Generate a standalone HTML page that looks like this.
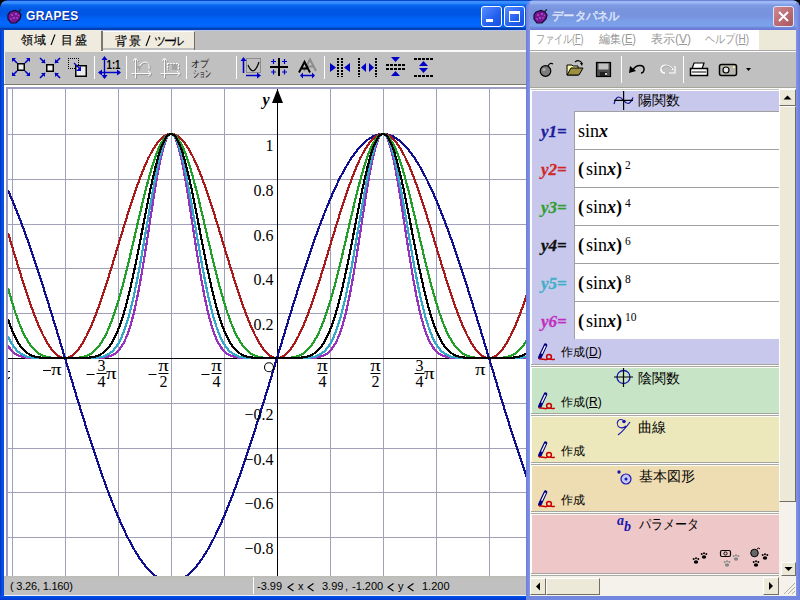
<!DOCTYPE html>
<html><head><meta charset="utf-8">
<style>
*{margin:0;padding:0;box-sizing:border-box}
html,body{width:800px;height:600px;overflow:hidden;background:#000;font-family:"Liberation Sans",sans-serif}
.a{position:absolute}
.jp{font-family:"Liberation Sans",sans-serif}
.serif{font-family:"Liberation Serif",serif}
</style></head><body>
<!-- GRAPES window -->
<div class="a" style="left:0;top:0;width:540px;height:600px;overflow:hidden;border-radius:8px 8px 0 0">
  <div class="a" style="left:0;top:0;width:540px;height:30px;border-radius:7px 7px 0 0;background:linear-gradient(#0848c8 0,#0848c8 1px,#3a8eff 1px,#3a8eff 3px,#0a68f0 5px,#0058e4 9px,#0055e2 14px,#0062f8 19px,#0068ff 25px,#0060f0 27px,#0040b8 28.5px,#0040b0 30px)"></div>
  <div class="a" style="left:0;top:30px;width:4px;height:570px;background:linear-gradient(90deg,#0030c0,#0a50e0 50%,#0050ea)"></div>
  <div class="a" style="left:0;top:596px;width:540px;height:4px;background:linear-gradient(#0050ea,#0038d0)"></div>
  <div class="a jp" style="left:26px;top:9px;font-size:12px;font-weight:bold;color:#fff;letter-spacing:0.3px;text-shadow:1px 1px #0a1e8a">GRAPES</div>
  <svg class="a" style="left:7px;top:9px" width="16" height="15" viewBox="0 0 16 15"><path d="M3 3 L8 1.5 L12 3 L14 6 L13 10 L9 14 L4 14 L1 10 L1 6 Z" fill="#741890" stroke="#180838" stroke-width="1.2"/><path d="M11 3 L14 0.5" stroke="#102838" stroke-width="1.3"/><circle cx="5" cy="6" r="0.9" fill="#c050d8"/><circle cx="9" cy="5" r="0.9" fill="#c050d8"/><circle cx="7" cy="9" r="0.9" fill="#c050d8"/><circle cx="4" cy="10" r="0.9" fill="#b040c8"/><circle cx="10" cy="9" r="0.9" fill="#b040c8"/><circle cx="11.5" cy="6.5" r="0.8" fill="#b040c8"/></svg>
  <!-- client -->
  <div class="a" style="left:4px;top:30px;width:536px;height:565px;background:#c0c0c0"></div>
  <div class="a" style="left:4px;top:30px;width:536px;height:1px;background:#b8c4e8"></div>
  <div class="a" style="left:4px;top:50px;width:536px;height:2px;background:#fafafa"></div>
  <div class="a" style="left:4px;top:30px;width:97px;height:22px;background:#efebdf"></div>
  <div class="a" style="left:101px;top:31px;width:2px;height:20px;background:#78786c"></div>
  <div class="a" style="left:21px;top:33px;font-size:12px;line-height:14px;color:#000;-webkit-text-stroke:0.15px #000">領</div><div class="a" style="left:34px;top:33px;font-size:12px;line-height:14px;color:#000;-webkit-text-stroke:0.15px #000">域</div><svg class="a" style="left:49.5px;top:34px" width="6" height="12"><path d="M5 0.5 L1 11" stroke="#000" stroke-width="1.1"/></svg><div class="a" style="left:61px;top:33px;font-size:12px;line-height:14px;color:#000;-webkit-text-stroke:0.15px #000">目</div><div class="a" style="left:74.5px;top:33px;font-size:12px;line-height:14px;color:#000;-webkit-text-stroke:0.15px #000">盛</div>
  <div class="a" style="left:103px;top:31px;width:91px;height:1px;background:#fff"></div>
  <div class="a" style="left:103px;top:32px;width:91px;height:16px;background:#efebdf"></div>
  <div class="a" style="left:194px;top:32px;width:1px;height:18px;background:#6c6c60"></div>
  <div class="a" style="left:115px;top:34px;font-size:12px;line-height:14px;color:#000;-webkit-text-stroke:0.15px #000">背</div><div class="a" style="left:128.5px;top:34px;font-size:12px;line-height:14px;color:#000;-webkit-text-stroke:0.15px #000">景</div><svg class="a" style="left:144.5px;top:35px" width="6" height="12"><path d="M5 0.5 L1 11" stroke="#000" stroke-width="1.1"/></svg><div class="a" style="left:154px;top:34px;font-size:12px;line-height:14px;color:#000;-webkit-text-stroke:0.15px #000">ツ</div><div class="a" style="left:164px;top:34px;font-size:12px;line-height:14px;color:#000;-webkit-text-stroke:0.15px #000">ー</div><div class="a" style="left:171.5px;top:34px;font-size:12px;line-height:14px;color:#000;-webkit-text-stroke:0.15px #000">ル</div>
  <!-- toolbar -->
  <div class="a" style="left:4px;top:84px;width:536px;height:1px;background:#7c7c6c"></div><div class="a" style="left:4px;top:52px;width:1px;height:32px;background:#f4f4f4"></div>
  <div class="a" style="left:4px;top:85px;width:536px;height:2px;background:#fff"></div>
  <svg class="a" style="left:0;top:0" width="540" height="90"><rect x="17.75" y="63.75" width="6.5" height="6.5" fill="#ececec" stroke="#000" stroke-width="1.5"/><path d="M12 58 h4 L12 62 Z" fill="#0000c8"/><path d="M13 59 l4 4" stroke="#0000c8" stroke-width="1.6"/><path d="M30 58 h-4 L30 62 Z" fill="#0000c8"/><path d="M29 59 l-4 4" stroke="#0000c8" stroke-width="1.6"/><path d="M12 76 h4 L12 72 Z" fill="#0000c8"/><path d="M13 75 l4 -4" stroke="#0000c8" stroke-width="1.6"/><path d="M30 76 h-4 L30 72 Z" fill="#0000c8"/><path d="M29 75 l-4 -4" stroke="#0000c8" stroke-width="1.6"/><rect x="46.75" y="64.75" width="6.5" height="6.5" fill="#ececec" stroke="#000" stroke-width="1.5"/><path d="M45 63 h-4 L45 59 Z" fill="#0000c8"/><path d="M45 63 l-5 -5" stroke="#0000c8" stroke-width="1.6"/><path d="M55 63 h4 L55 59 Z" fill="#0000c8"/><path d="M55 63 l5 -5" stroke="#0000c8" stroke-width="1.6"/><path d="M45 73 h-4 L45 77 Z" fill="#0000c8"/><path d="M45 73 l-5 5" stroke="#0000c8" stroke-width="1.6"/><path d="M55 73 h4 L55 77 Z" fill="#0000c8"/><path d="M55 73 l5 5" stroke="#0000c8" stroke-width="1.6"/><g fill="#000"><rect x="68" y="58" width="1" height="1"/><rect x="68" y="68" width="1" height="1"/><rect x="70" y="58" width="1" height="1"/><rect x="70" y="68" width="1" height="1"/><rect x="72" y="58" width="1" height="1"/><rect x="72" y="68" width="1" height="1"/><rect x="74" y="58" width="1" height="1"/><rect x="74" y="68" width="1" height="1"/><rect x="76" y="58" width="1" height="1"/><rect x="76" y="68" width="1" height="1"/><rect x="78" y="58" width="1" height="1"/><rect x="78" y="68" width="1" height="1"/><rect x="68" y="58" width="1" height="1"/><rect x="78" y="58" width="1" height="1"/><rect x="68" y="60" width="1" height="1"/><rect x="78" y="60" width="1" height="1"/><rect x="68" y="62" width="1" height="1"/><rect x="78" y="62" width="1" height="1"/><rect x="68" y="64" width="1" height="1"/><rect x="78" y="64" width="1" height="1"/><rect x="68" y="66" width="1" height="1"/><rect x="78" y="66" width="1" height="1"/><rect x="68" y="68" width="1" height="1"/><rect x="78" y="68" width="1" height="1"/></g><rect x="75.75" y="65.75" width="10.5" height="10.5" fill="#ececec" stroke="#000" stroke-width="1.5"/><path d="M74 63 L79.5 68.5" stroke="#0000c8" stroke-width="1.2"/><path d="M81 66 v5 h-5 Z" fill="#0000c8"/><rect x="94" y="56" width="1" height="23" fill="#fff"/><rect x="126" y="56" width="1" height="23" fill="#fff"/><rect x="186" y="56" width="1" height="23" fill="#fff"/><rect x="236" y="56" width="1" height="23" fill="#fff"/><rect x="324" y="56" width="1" height="23" fill="#fff"/><path d="M104.5 58 V78 M99 72.5 H120" stroke="#0000c8" stroke-width="1.4"/><path d="M104.5 56 l-3 4 h6 Z M104.5 79 l-3 -4 h6 Z M98 72.5 l4 -3 v6 Z M121 72.5 l-4 -3 v6 Z" fill="#0000c8"/><text x="106.5" y="69" font-family="Liberation Sans" font-weight="bold" font-size="12.5" fill="#000" textLength="14" lengthAdjust="spacingAndGlyphs">1:1</text><g stroke="#9a9a9a" stroke-width="1" fill="none"><path d="M136.5 60.0 V79.0"/><path d="M132.5 74.5 H152.0"/><path d="M134.0 62.0 l2.5 -3 l2.5 3"/><path d="M149.0 72.0 l3 2.5 l-3 2.5"/><path d="M139.0 71.0 Q141.0 63.0 146.0 63.0 Q151.0 63.0 150.0 70.0"/></g><g stroke="#fafafa" stroke-width="1" fill="none"><path d="M135.5 59.0 V78.0"/><path d="M131.5 73.5 H151.0"/><path d="M133.0 61.0 l2.5 -3 l2.5 3"/><path d="M148.0 71.0 l3 2.5 l-3 2.5"/><path d="M138.0 70.0 Q140.0 62.0 145.0 62.0 Q150.0 62.0 149.0 69.0"/></g><path d="M137 66 l4 0 l-3 4 Z" fill="#a4a4a4"/><g stroke="#9a9a9a" stroke-width="1" fill="none"><path d="M165.5 60.0 V79.0"/><path d="M161.5 74.5 H181.0"/><path d="M163.0 62.0 l2.5 -3 l2.5 3"/><path d="M178.0 72.0 l3 2.5 l-3 2.5"/><path d="M168.0 64.5 H179.5 V71.0" stroke-dasharray="2 1"/><path d="M168.5 64.0 V71.0" stroke-dasharray="2 1"/></g><g stroke="#fafafa" stroke-width="1" fill="none"><path d="M164.5 59.0 V78.0"/><path d="M160.5 73.5 H180.0"/><path d="M162.0 61.0 l2.5 -3 l2.5 3"/><path d="M177.0 71.0 l3 2.5 l-3 2.5"/><path d="M167.0 63.5 H178.5 V70.0" stroke-dasharray="2 1"/><path d="M167.5 63.0 V70.0" stroke-dasharray="2 1"/></g><path d="M172 65 h5 v5 h-5 Z" fill="#a4a4a4"/><text x="191" y="67" font-size="10" fill="#000" transform="translate(191 0) scale(0.9 1) translate(-191 0)">オプ</text><text x="193" y="77.5" font-size="10" fill="#000" transform="translate(193 0) scale(0.62 1) translate(-193 0)">ション</text><rect x="246.5" y="58.5" width="14" height="14" fill="none" stroke="#8c8c8c"/><path d="M248 65 Q253.5 78 259 62" stroke="#000" stroke-width="1.2" fill="none"/><path d="M243.5 73 V59" stroke="#0000c8" stroke-width="1.6"/><path d="M243.5 57 l-3 4 h6 Z" fill="#0000c8"/><path d="M246 75.5 H259" stroke="#0000c8" stroke-width="1.6"/><path d="M261 75.5 l-4 -3 v6 Z" fill="#0000c8"/><path d="M278 58 h2 v18 h-2 Z M270 66 h18 v2 h-18 Z" fill="#000"/><path d="M271.0 61.5 h5 M273.5 59.0 v5" stroke="#0000c8" stroke-width="1.2"/><path d="M282.0 61.5 h5 M284.5 59.0 v5" stroke="#0000c8" stroke-width="1.2"/><path d="M271.0 72.0 h5 M273.5 69.5 v5" stroke="#0000c8" stroke-width="1.2"/><path d="M282.0 72.0 h5 M284.5 69.5 v5" stroke="#0000c8" stroke-width="1.2"/><path d="M304 71 L310 59.5 L316 71 M306.5 66.5 H313.5" stroke="#8c8c8c" stroke-width="2" fill="none"/><path d="M299 72.5 L304.5 62 L310 72.5 M301.5 68.5 H307.5" stroke="#000" stroke-width="2" fill="none"/><path d="M302 75.5 H313" stroke="#0000c8" stroke-width="1.5"/><path d="M300 75.5 l3 -3 v6 Z M315 75.5 l-3 -3 v6 Z" fill="#0000c8"/><path d="M330 63 l6 4.5 l-6 4.5 Z M350 63 l-6 4.5 l6 4.5 Z" fill="#0000c8"/><path d="M338 58 V77 M342 58 V77" stroke="#000" stroke-width="2" stroke-dasharray="2 1"/><path d="M359 58 V77 M376 58 V77" stroke="#000" stroke-width="2" stroke-dasharray="2 1"/><path d="M361 67.5 l5 -4.5 v9 Z M374 67.5 l-5 -4.5 v9 Z" fill="#0000c8"/><path d="M391 57 h9 l-4.5 5 Z M391 76 h9 l-4.5 -5 Z" fill="#0000c8"/><path d="M386 65 H405 M386 69 H405" stroke="#000" stroke-width="2" stroke-dasharray="3 1"/><path d="M414 59 H433 M414 76 H433" stroke="#000" stroke-width="2" stroke-dasharray="3 1"/><path d="M419 66 h9 l-4.5 -5 Z M419 68 h9 l-4.5 5 Z" fill="#0000c8"/></svg>
  <!-- graph -->
  <div class="a" style="left:4px;top:85px;width:2px;height:491px;background:#fff"></div>
  <svg class="a" style="left:0;top:0" width="540" height="600" viewBox="0 0 540 600">
    <defs><clipPath id="gc"><rect x="8" y="89" width="520" height="487"/></clipPath></defs>
    <rect x="6" y="87" width="534" height="2" fill="#9c9cc4"/>
    <rect x="6" y="87" width="2" height="489" fill="#9c9cc4"/>
    <rect x="8" y="89" width="532" height="487" fill="#fff"/>
    <g clip-path="url(#gc)">
    <rect x="12" y="89" width="1" height="487" fill="#a0a0b8"/>
<rect x="65" y="89" width="1" height="487" fill="#a0a0b8"/>
<rect x="118" y="89" width="1" height="487" fill="#a0a0b8"/>
<rect x="171" y="89" width="1" height="487" fill="#a0a0b8"/>
<rect x="224" y="89" width="1" height="487" fill="#a0a0b8"/>
<rect x="330" y="89" width="1" height="487" fill="#a0a0b8"/>
<rect x="383" y="89" width="1" height="487" fill="#a0a0b8"/>
<rect x="436" y="89" width="1" height="487" fill="#a0a0b8"/>
<rect x="489" y="89" width="1" height="487" fill="#a0a0b8"/>
<rect x="8" y="134" width="520" height="1" fill="#a0a0b8"/>
<rect x="8" y="179" width="520" height="1" fill="#a0a0b8"/>
<rect x="8" y="224" width="520" height="1" fill="#a0a0b8"/>
<rect x="8" y="268" width="520" height="1" fill="#a0a0b8"/>
<rect x="8" y="313" width="520" height="1" fill="#a0a0b8"/>
<rect x="8" y="403" width="520" height="1" fill="#a0a0b8"/>
<rect x="8" y="448" width="520" height="1" fill="#a0a0b8"/>
<rect x="8" y="492" width="520" height="1" fill="#a0a0b8"/>
<rect x="8" y="537" width="520" height="1" fill="#a0a0b8"/>
    <rect x="277" y="89" width="1" height="487" fill="#000"/>
    <rect x="8" y="358" width="532" height="1" fill="#000"/>
    <polyline fill="none" stroke="#101090" stroke-width="2.2" shape-rendering="crispEdges" points="8.00,190.50 8.50,191.61 9.00,192.73 9.50,193.85 10.00,194.98 10.50,196.13 11.00,197.28 11.50,198.44 12.00,199.61 12.50,200.79 13.00,201.97 13.50,203.17 14.00,204.37 14.50,205.58 15.00,206.80 15.50,208.03 16.00,209.27 16.50,210.51 17.00,211.77 17.50,213.03 18.00,214.30 18.50,215.58 19.00,216.86 19.50,218.15 20.00,219.45 20.50,220.76 21.00,222.08 21.50,223.40 22.00,224.73 22.50,226.07 23.00,227.41 23.50,228.76 24.00,230.12 24.50,231.49 25.00,232.86 25.50,234.24 26.00,235.63 26.50,237.02 27.00,238.42 27.50,239.83 28.00,241.24 28.50,242.66 29.00,244.09 29.50,245.52 30.00,246.96 30.50,248.40 31.00,249.85 31.50,251.31 32.00,252.77 32.50,254.24 33.00,255.72 33.50,257.19 34.00,258.68 34.50,260.17 35.00,261.67 35.50,263.17 36.00,264.67 36.50,266.18 37.00,267.70 37.50,269.22 38.00,270.75 38.50,272.28 39.00,273.81 39.50,275.35 40.00,276.90 40.50,278.45 41.00,280.00 41.50,281.56 42.00,283.12 42.50,284.69 43.00,286.26 43.50,287.83 44.00,289.41 44.50,290.99 45.00,292.58 45.50,294.17 46.00,295.76 46.50,297.36 47.00,298.96 47.50,300.56 48.00,302.16 48.50,303.77 49.00,305.39 49.50,307.00 50.00,308.62 50.50,310.24 51.00,311.86 51.50,313.49 52.00,315.11 52.50,316.74 53.00,318.38 53.50,320.01 54.00,321.65 54.50,323.29 55.00,324.93 55.50,326.57 56.00,328.21 56.50,329.86 57.00,331.51 57.50,333.16 58.00,334.81 58.50,336.46 59.00,338.11 59.50,339.76 60.00,341.42 60.50,343.07 61.00,344.73 61.50,346.39 62.00,348.05 62.50,349.70 63.00,351.36 63.50,353.02 64.00,354.68 64.50,356.34 65.00,358.00 65.50,359.66 66.00,361.32 66.50,362.98 67.00,364.64 67.50,366.30 68.00,367.95 68.50,369.61 69.00,371.27 69.50,372.93 70.00,374.58 70.50,376.24 71.00,377.89 71.50,379.54 72.00,381.19 72.50,382.84 73.00,384.49 73.50,386.14 74.00,387.79 74.50,389.43 75.00,391.07 75.50,392.71 76.00,394.35 76.50,395.99 77.00,397.62 77.50,399.26 78.00,400.89 78.50,402.51 79.00,404.14 79.50,405.76 80.00,407.38 80.50,409.00 81.00,410.61 81.50,412.23 82.00,413.84 82.50,415.44 83.00,417.04 83.50,418.64 84.00,420.24 84.50,421.83 85.00,423.42 85.50,425.01 86.00,426.59 86.50,428.17 87.00,429.74 87.50,431.31 88.00,432.88 88.50,434.44 89.00,436.00 89.50,437.55 90.00,439.10 90.50,440.65 91.00,442.19 91.50,443.72 92.00,445.25 92.50,446.78 93.00,448.30 93.50,449.82 94.00,451.33 94.50,452.83 95.00,454.33 95.50,455.83 96.00,457.32 96.50,458.81 97.00,460.28 97.50,461.76 98.00,463.23 98.50,464.69 99.00,466.15 99.50,467.60 100.00,469.04 100.50,470.48 101.00,471.91 101.50,473.34 102.00,474.76 102.50,476.17 103.00,477.58 103.50,478.98 104.00,480.37 104.50,481.76 105.00,483.14 105.50,484.51 106.00,485.88 106.50,487.24 107.00,488.59 107.50,489.93 108.00,491.27 108.50,492.60 109.00,493.92 109.50,495.24 110.00,496.55 110.50,497.85 111.00,499.14 111.50,500.42 112.00,501.70 112.50,502.97 113.00,504.23 113.50,505.49 114.00,506.73 114.50,507.97 115.00,509.20 115.50,510.42 116.00,511.63 116.50,512.83 117.00,514.03 117.50,515.21 118.00,516.39 118.50,517.56 119.00,518.72 119.50,519.87 120.00,521.02 120.50,522.15 121.00,523.27 121.50,524.39 122.00,525.50 122.50,526.59 123.00,527.68 123.50,528.76 124.00,529.83 124.50,530.89 125.00,531.94 125.50,532.98 126.00,534.01 126.50,535.04 127.00,536.05 127.50,537.05 128.00,538.04 128.50,539.02 129.00,540.00 129.50,540.96 130.00,541.91 130.50,542.85 131.00,543.79 131.50,544.71 132.00,545.62 132.50,546.52 133.00,547.41 133.50,548.29 134.00,549.16 134.50,550.02 135.00,550.87 135.50,551.71 136.00,552.54 136.50,553.36 137.00,554.16 137.50,554.96 138.00,555.75 138.50,556.52 139.00,557.28 139.50,558.04 140.00,558.78 140.50,559.51 141.00,560.23 141.50,560.93 142.00,561.63 142.50,562.32 143.00,562.99 143.50,563.66 144.00,564.31 144.50,564.95 145.00,565.58 145.50,566.20 146.00,566.80 146.50,567.40 147.00,567.98 147.50,568.55 148.00,569.11 148.50,569.66 149.00,570.20 149.50,570.73 150.00,571.24 150.50,571.74 151.00,572.23 151.50,572.71 152.00,573.18 152.50,573.63 153.00,574.08 153.50,574.51 154.00,574.93 154.50,575.34 155.00,575.73 155.50,576.12 156.00,576.49 156.50,576.85 157.00,577.20 157.50,577.53 158.00,577.86 158.50,578.17 159.00,578.47 159.50,578.76 160.00,579.03 160.50,579.29 161.00,579.55 161.50,579.78 162.00,580.01 162.50,580.23 163.00,580.43 163.50,580.62 164.00,580.80 164.50,580.96 165.00,581.12 165.50,581.26 166.00,581.39 166.50,581.50 167.00,581.61 167.50,581.70 168.00,581.78 168.50,581.85 169.00,581.90 169.50,581.94 170.00,581.98 170.50,581.99 171.00,582.00 171.50,581.99 172.00,581.98 172.50,581.94 173.00,581.90 173.50,581.85 174.00,581.78 174.50,581.70 175.00,581.61 175.50,581.50 176.00,581.39 176.50,581.26 177.00,581.12 177.50,580.96 178.00,580.80 178.50,580.62 179.00,580.43 179.50,580.23 180.00,580.01 180.50,579.78 181.00,579.55 181.50,579.29 182.00,579.03 182.50,578.76 183.00,578.47 183.50,578.17 184.00,577.86 184.50,577.53 185.00,577.20 185.50,576.85 186.00,576.49 186.50,576.12 187.00,575.73 187.50,575.34 188.00,574.93 188.50,574.51 189.00,574.08 189.50,573.63 190.00,573.18 190.50,572.71 191.00,572.23 191.50,571.74 192.00,571.24 192.50,570.73 193.00,570.20 193.50,569.66 194.00,569.11 194.50,568.55 195.00,567.98 195.50,567.40 196.00,566.80 196.50,566.20 197.00,565.58 197.50,564.95 198.00,564.31 198.50,563.66 199.00,562.99 199.50,562.32 200.00,561.63 200.50,560.93 201.00,560.23 201.50,559.51 202.00,558.78 202.50,558.04 203.00,557.28 203.50,556.52 204.00,555.75 204.50,554.96 205.00,554.16 205.50,553.36 206.00,552.54 206.50,551.71 207.00,550.87 207.50,550.02 208.00,549.16 208.50,548.29 209.00,547.41 209.50,546.52 210.00,545.62 210.50,544.71 211.00,543.79 211.50,542.85 212.00,541.91 212.50,540.96 213.00,540.00 213.50,539.02 214.00,538.04 214.50,537.05 215.00,536.05 215.50,535.04 216.00,534.01 216.50,532.98 217.00,531.94 217.50,530.89 218.00,529.83 218.50,528.76 219.00,527.68 219.50,526.59 220.00,525.50 220.50,524.39 221.00,523.27 221.50,522.15 222.00,521.02 222.50,519.87 223.00,518.72 223.50,517.56 224.00,516.39 224.50,515.21 225.00,514.03 225.50,512.83 226.00,511.63 226.50,510.42 227.00,509.20 227.50,507.97 228.00,506.73 228.50,505.49 229.00,504.23 229.50,502.97 230.00,501.70 230.50,500.42 231.00,499.14 231.50,497.85 232.00,496.55 232.50,495.24 233.00,493.92 233.50,492.60 234.00,491.27 234.50,489.93 235.00,488.59 235.50,487.24 236.00,485.88 236.50,484.51 237.00,483.14 237.50,481.76 238.00,480.37 238.50,478.98 239.00,477.58 239.50,476.17 240.00,474.76 240.50,473.34 241.00,471.91 241.50,470.48 242.00,469.04 242.50,467.60 243.00,466.15 243.50,464.69 244.00,463.23 244.50,461.76 245.00,460.28 245.50,458.81 246.00,457.32 246.50,455.83 247.00,454.33 247.50,452.83 248.00,451.33 248.50,449.82 249.00,448.30 249.50,446.78 250.00,445.25 250.50,443.72 251.00,442.19 251.50,440.65 252.00,439.10 252.50,437.55 253.00,436.00 253.50,434.44 254.00,432.88 254.50,431.31 255.00,429.74 255.50,428.17 256.00,426.59 256.50,425.01 257.00,423.42 257.50,421.83 258.00,420.24 258.50,418.64 259.00,417.04 259.50,415.44 260.00,413.84 260.50,412.23 261.00,410.61 261.50,409.00 262.00,407.38 262.50,405.76 263.00,404.14 263.50,402.51 264.00,400.89 264.50,399.26 265.00,397.62 265.50,395.99 266.00,394.35 266.50,392.71 267.00,391.07 267.50,389.43 268.00,387.79 268.50,386.14 269.00,384.49 269.50,382.84 270.00,381.19 270.50,379.54 271.00,377.89 271.50,376.24 272.00,374.58 272.50,372.93 273.00,371.27 273.50,369.61 274.00,367.95 274.50,366.30 275.00,364.64 275.50,362.98 276.00,361.32 276.50,359.66 277.00,358.00 277.50,356.34 278.00,354.68 278.50,353.02 279.00,351.36 279.50,349.70 280.00,348.05 280.50,346.39 281.00,344.73 281.50,343.07 282.00,341.42 282.50,339.76 283.00,338.11 283.50,336.46 284.00,334.81 284.50,333.16 285.00,331.51 285.50,329.86 286.00,328.21 286.50,326.57 287.00,324.93 287.50,323.29 288.00,321.65 288.50,320.01 289.00,318.38 289.50,316.74 290.00,315.11 290.50,313.49 291.00,311.86 291.50,310.24 292.00,308.62 292.50,307.00 293.00,305.39 293.50,303.77 294.00,302.16 294.50,300.56 295.00,298.96 295.50,297.36 296.00,295.76 296.50,294.17 297.00,292.58 297.50,290.99 298.00,289.41 298.50,287.83 299.00,286.26 299.50,284.69 300.00,283.12 300.50,281.56 301.00,280.00 301.50,278.45 302.00,276.90 302.50,275.35 303.00,273.81 303.50,272.28 304.00,270.75 304.50,269.22 305.00,267.70 305.50,266.18 306.00,264.67 306.50,263.17 307.00,261.67 307.50,260.17 308.00,258.68 308.50,257.19 309.00,255.72 309.50,254.24 310.00,252.77 310.50,251.31 311.00,249.85 311.50,248.40 312.00,246.96 312.50,245.52 313.00,244.09 313.50,242.66 314.00,241.24 314.50,239.83 315.00,238.42 315.50,237.02 316.00,235.63 316.50,234.24 317.00,232.86 317.50,231.49 318.00,230.12 318.50,228.76 319.00,227.41 319.50,226.07 320.00,224.73 320.50,223.40 321.00,222.08 321.50,220.76 322.00,219.45 322.50,218.15 323.00,216.86 323.50,215.58 324.00,214.30 324.50,213.03 325.00,211.77 325.50,210.51 326.00,209.27 326.50,208.03 327.00,206.80 327.50,205.58 328.00,204.37 328.50,203.17 329.00,201.97 329.50,200.79 330.00,199.61 330.50,198.44 331.00,197.28 331.50,196.13 332.00,194.98 332.50,193.85 333.00,192.73 333.50,191.61 334.00,190.50 334.50,189.41 335.00,188.32 335.50,187.24 336.00,186.17 336.50,185.11 337.00,184.06 337.50,183.02 338.00,181.99 338.50,180.96 339.00,179.95 339.50,178.95 340.00,177.96 340.50,176.98 341.00,176.00 341.50,175.04 342.00,174.09 342.50,173.15 343.00,172.21 343.50,171.29 344.00,170.38 344.50,169.48 345.00,168.59 345.50,167.71 346.00,166.84 346.50,165.98 347.00,165.13 347.50,164.29 348.00,163.46 348.50,162.64 349.00,161.84 349.50,161.04 350.00,160.25 350.50,159.48 351.00,158.72 351.50,157.96 352.00,157.22 352.50,156.49 353.00,155.77 353.50,155.07 354.00,154.37 354.50,153.68 355.00,153.01 355.50,152.34 356.00,151.69 356.50,151.05 357.00,150.42 357.50,149.80 358.00,149.20 358.50,148.60 359.00,148.02 359.50,147.45 360.00,146.89 360.50,146.34 361.00,145.80 361.50,145.27 362.00,144.76 362.50,144.26 363.00,143.77 363.50,143.29 364.00,142.82 364.50,142.37 365.00,141.92 365.50,141.49 366.00,141.07 366.50,140.66 367.00,140.27 367.50,139.88 368.00,139.51 368.50,139.15 369.00,138.80 369.50,138.47 370.00,138.14 370.50,137.83 371.00,137.53 371.50,137.24 372.00,136.97 372.50,136.71 373.00,136.45 373.50,136.22 374.00,135.99 374.50,135.77 375.00,135.57 375.50,135.38 376.00,135.20 376.50,135.04 377.00,134.88 377.50,134.74 378.00,134.61 378.50,134.50 379.00,134.39 379.50,134.30 380.00,134.22 380.50,134.15 381.00,134.10 381.50,134.06 382.00,134.02 382.50,134.01 383.00,134.00 383.50,134.01 384.00,134.02 384.50,134.06 385.00,134.10 385.50,134.15 386.00,134.22 386.50,134.30 387.00,134.39 387.50,134.50 388.00,134.61 388.50,134.74 389.00,134.88 389.50,135.04 390.00,135.20 390.50,135.38 391.00,135.57 391.50,135.77 392.00,135.99 392.50,136.22 393.00,136.45 393.50,136.71 394.00,136.97 394.50,137.24 395.00,137.53 395.50,137.83 396.00,138.14 396.50,138.47 397.00,138.80 397.50,139.15 398.00,139.51 398.50,139.88 399.00,140.27 399.50,140.66 400.00,141.07 400.50,141.49 401.00,141.92 401.50,142.37 402.00,142.82 402.50,143.29 403.00,143.77 403.50,144.26 404.00,144.76 404.50,145.27 405.00,145.80 405.50,146.34 406.00,146.89 406.50,147.45 407.00,148.02 407.50,148.60 408.00,149.20 408.50,149.80 409.00,150.42 409.50,151.05 410.00,151.69 410.50,152.34 411.00,153.01 411.50,153.68 412.00,154.37 412.50,155.07 413.00,155.77 413.50,156.49 414.00,157.22 414.50,157.96 415.00,158.72 415.50,159.48 416.00,160.25 416.50,161.04 417.00,161.84 417.50,162.64 418.00,163.46 418.50,164.29 419.00,165.13 419.50,165.98 420.00,166.84 420.50,167.71 421.00,168.59 421.50,169.48 422.00,170.38 422.50,171.29 423.00,172.21 423.50,173.15 424.00,174.09 424.50,175.04 425.00,176.00 425.50,176.98 426.00,177.96 426.50,178.95 427.00,179.95 427.50,180.96 428.00,181.99 428.50,183.02 429.00,184.06 429.50,185.11 430.00,186.17 430.50,187.24 431.00,188.32 431.50,189.41 432.00,190.50 432.50,191.61 433.00,192.73 433.50,193.85 434.00,194.98 434.50,196.13 435.00,197.28 435.50,198.44 436.00,199.61 436.50,200.79 437.00,201.97 437.50,203.17 438.00,204.37 438.50,205.58 439.00,206.80 439.50,208.03 440.00,209.27 440.50,210.51 441.00,211.77 441.50,213.03 442.00,214.30 442.50,215.58 443.00,216.86 443.50,218.15 444.00,219.45 444.50,220.76 445.00,222.08 445.50,223.40 446.00,224.73 446.50,226.07 447.00,227.41 447.50,228.76 448.00,230.12 448.50,231.49 449.00,232.86 449.50,234.24 450.00,235.63 450.50,237.02 451.00,238.42 451.50,239.83 452.00,241.24 452.50,242.66 453.00,244.09 453.50,245.52 454.00,246.96 454.50,248.40 455.00,249.85 455.50,251.31 456.00,252.77 456.50,254.24 457.00,255.72 457.50,257.19 458.00,258.68 458.50,260.17 459.00,261.67 459.50,263.17 460.00,264.67 460.50,266.18 461.00,267.70 461.50,269.22 462.00,270.75 462.50,272.28 463.00,273.81 463.50,275.35 464.00,276.90 464.50,278.45 465.00,280.00 465.50,281.56 466.00,283.12 466.50,284.69 467.00,286.26 467.50,287.83 468.00,289.41 468.50,290.99 469.00,292.58 469.50,294.17 470.00,295.76 470.50,297.36 471.00,298.96 471.50,300.56 472.00,302.16 472.50,303.77 473.00,305.39 473.50,307.00 474.00,308.62 474.50,310.24 475.00,311.86 475.50,313.49 476.00,315.11 476.50,316.74 477.00,318.38 477.50,320.01 478.00,321.65 478.50,323.29 479.00,324.93 479.50,326.57 480.00,328.21 480.50,329.86 481.00,331.51 481.50,333.16 482.00,334.81 482.50,336.46 483.00,338.11 483.50,339.76 484.00,341.42 484.50,343.07 485.00,344.73 485.50,346.39 486.00,348.05 486.50,349.70 487.00,351.36 487.50,353.02 488.00,354.68 488.50,356.34 489.00,358.00 489.50,359.66 490.00,361.32 490.50,362.98 491.00,364.64 491.50,366.30 492.00,367.95 492.50,369.61 493.00,371.27 493.50,372.93 494.00,374.58 494.50,376.24 495.00,377.89 495.50,379.54 496.00,381.19 496.50,382.84 497.00,384.49 497.50,386.14 498.00,387.79 498.50,389.43 499.00,391.07 499.50,392.71 500.00,394.35 500.50,395.99 501.00,397.62 501.50,399.26 502.00,400.89 502.50,402.51 503.00,404.14 503.50,405.76 504.00,407.38 504.50,409.00 505.00,410.61 505.50,412.23 506.00,413.84 506.50,415.44 507.00,417.04 507.50,418.64 508.00,420.24 508.50,421.83 509.00,423.42 509.50,425.01 510.00,426.59 510.50,428.17 511.00,429.74 511.50,431.31 512.00,432.88 512.50,434.44 513.00,436.00 513.50,437.55 514.00,439.10 514.50,440.65 515.00,442.19 515.50,443.72 516.00,445.25 516.50,446.78 517.00,448.30 517.50,449.82 518.00,451.33 518.50,452.83 519.00,454.33 519.50,455.83 520.00,457.32 520.50,458.81 521.00,460.28 521.50,461.76 522.00,463.23 522.50,464.69 523.00,466.15 523.50,467.60 524.00,469.04 524.50,470.48 525.00,471.91 525.50,473.34 526.00,474.76 526.50,476.17 527.00,477.58"/>
<polyline fill="none" stroke="#aa1a1a" stroke-width="2.2" shape-rendering="crispEdges" points="8.00,232.75 8.50,234.40 9.00,236.05 9.50,237.71 10.00,239.37 10.50,241.02 11.00,242.68 11.50,244.34 12.00,246.00 12.50,247.66 13.00,249.32 13.50,250.98 14.00,252.63 14.50,254.29 15.00,255.95 15.50,257.60 16.00,259.25 16.50,260.89 17.00,262.54 17.50,264.18 18.00,265.81 18.50,267.44 19.00,269.07 19.50,270.69 20.00,272.31 20.50,273.92 21.00,275.52 21.50,277.12 22.00,278.71 22.50,280.29 23.00,281.87 23.50,283.44 24.00,285.00 24.50,286.55 25.00,288.09 25.50,289.63 26.00,291.15 26.50,292.66 27.00,294.17 27.50,295.66 28.00,297.14 28.50,298.61 29.00,300.07 29.50,301.52 30.00,302.96 30.50,304.38 31.00,305.79 31.50,307.19 32.00,308.57 32.50,309.94 33.00,311.29 33.50,312.63 34.00,313.96 34.50,315.27 35.00,316.57 35.50,317.85 36.00,319.12 36.50,320.37 37.00,321.60 37.50,322.81 38.00,324.01 38.50,325.20 39.00,326.36 39.50,327.51 40.00,328.64 40.50,329.75 41.00,330.84 41.50,331.92 42.00,332.97 42.50,334.01 43.00,335.02 43.50,336.02 44.00,337.00 44.50,337.96 45.00,338.89 45.50,339.81 46.00,340.71 46.50,341.58 47.00,342.44 47.50,343.27 48.00,344.08 48.50,344.87 49.00,345.64 49.50,346.39 50.00,347.11 50.50,347.82 51.00,348.50 51.50,349.15 52.00,349.79 52.50,350.40 53.00,350.99 53.50,351.56 54.00,352.10 54.50,352.62 55.00,353.12 55.50,353.59 56.00,354.04 56.50,354.46 57.00,354.87 57.50,355.24 58.00,355.60 58.50,355.93 59.00,356.23 59.50,356.52 60.00,356.77 60.50,357.01 61.00,357.21 61.50,357.40 62.00,357.56 62.50,357.69 63.00,357.80 63.50,357.89 64.00,357.95 64.50,357.99 65.00,358.00 65.50,357.99 66.00,357.95 66.50,357.89 67.00,357.80 67.50,357.69 68.00,357.56 68.50,357.40 69.00,357.21 69.50,357.01 70.00,356.77 70.50,356.52 71.00,356.23 71.50,355.93 72.00,355.60 72.50,355.24 73.00,354.87 73.50,354.46 74.00,354.04 74.50,353.59 75.00,353.12 75.50,352.62 76.00,352.10 76.50,351.56 77.00,350.99 77.50,350.40 78.00,349.79 78.50,349.15 79.00,348.50 79.50,347.82 80.00,347.11 80.50,346.39 81.00,345.64 81.50,344.87 82.00,344.08 82.50,343.27 83.00,342.44 83.50,341.58 84.00,340.71 84.50,339.81 85.00,338.89 85.50,337.96 86.00,337.00 86.50,336.02 87.00,335.02 87.50,334.01 88.00,332.97 88.50,331.92 89.00,330.84 89.50,329.75 90.00,328.64 90.50,327.51 91.00,326.36 91.50,325.20 92.00,324.01 92.50,322.81 93.00,321.60 93.50,320.37 94.00,319.12 94.50,317.85 95.00,316.57 95.50,315.27 96.00,313.96 96.50,312.63 97.00,311.29 97.50,309.94 98.00,308.57 98.50,307.19 99.00,305.79 99.50,304.38 100.00,302.96 100.50,301.52 101.00,300.07 101.50,298.61 102.00,297.14 102.50,295.66 103.00,294.17 103.50,292.66 104.00,291.15 104.50,289.63 105.00,288.09 105.50,286.55 106.00,285.00 106.50,283.44 107.00,281.87 107.50,280.29 108.00,278.71 108.50,277.12 109.00,275.52 109.50,273.92 110.00,272.31 110.50,270.69 111.00,269.07 111.50,267.44 112.00,265.81 112.50,264.18 113.00,262.54 113.50,260.89 114.00,259.25 114.50,257.60 115.00,255.95 115.50,254.29 116.00,252.63 116.50,250.98 117.00,249.32 117.50,247.66 118.00,246.00 118.50,244.34 119.00,242.68 119.50,241.02 120.00,239.37 120.50,237.71 121.00,236.05 121.50,234.40 122.00,232.75 122.50,231.11 123.00,229.46 123.50,227.82 124.00,226.19 124.50,224.56 125.00,222.93 125.50,221.31 126.00,219.69 126.50,218.08 127.00,216.48 127.50,214.88 128.00,213.29 128.50,211.71 129.00,210.13 129.50,208.56 130.00,207.00 130.50,205.45 131.00,203.91 131.50,202.37 132.00,200.85 132.50,199.34 133.00,197.83 133.50,196.34 134.00,194.86 134.50,193.39 135.00,191.93 135.50,190.48 136.00,189.04 136.50,187.62 137.00,186.21 137.50,184.81 138.00,183.43 138.50,182.06 139.00,180.71 139.50,179.37 140.00,178.04 140.50,176.73 141.00,175.43 141.50,174.15 142.00,172.88 142.50,171.63 143.00,170.40 143.50,169.19 144.00,167.99 144.50,166.80 145.00,165.64 145.50,164.49 146.00,163.36 146.50,162.25 147.00,161.16 147.50,160.08 148.00,159.03 148.50,157.99 149.00,156.98 149.50,155.98 150.00,155.00 150.50,154.04 151.00,153.11 151.50,152.19 152.00,151.29 152.50,150.42 153.00,149.56 153.50,148.73 154.00,147.92 154.50,147.13 155.00,146.36 155.50,145.61 156.00,144.89 156.50,144.18 157.00,143.50 157.50,142.85 158.00,142.21 158.50,141.60 159.00,141.01 159.50,140.44 160.00,139.90 160.50,139.38 161.00,138.88 161.50,138.41 162.00,137.96 162.50,137.54 163.00,137.13 163.50,136.76 164.00,136.40 164.50,136.07 165.00,135.77 165.50,135.48 166.00,135.23 166.50,134.99 167.00,134.79 167.50,134.60 168.00,134.44 168.50,134.31 169.00,134.20 169.50,134.11 170.00,134.05 170.50,134.01 171.00,134.00 171.50,134.01 172.00,134.05 172.50,134.11 173.00,134.20 173.50,134.31 174.00,134.44 174.50,134.60 175.00,134.79 175.50,134.99 176.00,135.23 176.50,135.48 177.00,135.77 177.50,136.07 178.00,136.40 178.50,136.76 179.00,137.13 179.50,137.54 180.00,137.96 180.50,138.41 181.00,138.88 181.50,139.38 182.00,139.90 182.50,140.44 183.00,141.01 183.50,141.60 184.00,142.21 184.50,142.85 185.00,143.50 185.50,144.18 186.00,144.89 186.50,145.61 187.00,146.36 187.50,147.13 188.00,147.92 188.50,148.73 189.00,149.56 189.50,150.42 190.00,151.29 190.50,152.19 191.00,153.11 191.50,154.04 192.00,155.00 192.50,155.98 193.00,156.98 193.50,157.99 194.00,159.03 194.50,160.08 195.00,161.16 195.50,162.25 196.00,163.36 196.50,164.49 197.00,165.64 197.50,166.80 198.00,167.99 198.50,169.19 199.00,170.40 199.50,171.63 200.00,172.88 200.50,174.15 201.00,175.43 201.50,176.73 202.00,178.04 202.50,179.37 203.00,180.71 203.50,182.06 204.00,183.43 204.50,184.81 205.00,186.21 205.50,187.62 206.00,189.04 206.50,190.48 207.00,191.93 207.50,193.39 208.00,194.86 208.50,196.34 209.00,197.83 209.50,199.34 210.00,200.85 210.50,202.37 211.00,203.91 211.50,205.45 212.00,207.00 212.50,208.56 213.00,210.13 213.50,211.71 214.00,213.29 214.50,214.88 215.00,216.48 215.50,218.08 216.00,219.69 216.50,221.31 217.00,222.93 217.50,224.56 218.00,226.19 218.50,227.82 219.00,229.46 219.50,231.11 220.00,232.75 220.50,234.40 221.00,236.05 221.50,237.71 222.00,239.37 222.50,241.02 223.00,242.68 223.50,244.34 224.00,246.00 224.50,247.66 225.00,249.32 225.50,250.98 226.00,252.63 226.50,254.29 227.00,255.95 227.50,257.60 228.00,259.25 228.50,260.89 229.00,262.54 229.50,264.18 230.00,265.81 230.50,267.44 231.00,269.07 231.50,270.69 232.00,272.31 232.50,273.92 233.00,275.52 233.50,277.12 234.00,278.71 234.50,280.29 235.00,281.87 235.50,283.44 236.00,285.00 236.50,286.55 237.00,288.09 237.50,289.63 238.00,291.15 238.50,292.66 239.00,294.17 239.50,295.66 240.00,297.14 240.50,298.61 241.00,300.07 241.50,301.52 242.00,302.96 242.50,304.38 243.00,305.79 243.50,307.19 244.00,308.57 244.50,309.94 245.00,311.29 245.50,312.63 246.00,313.96 246.50,315.27 247.00,316.57 247.50,317.85 248.00,319.12 248.50,320.37 249.00,321.60 249.50,322.81 250.00,324.01 250.50,325.20 251.00,326.36 251.50,327.51 252.00,328.64 252.50,329.75 253.00,330.84 253.50,331.92 254.00,332.97 254.50,334.01 255.00,335.02 255.50,336.02 256.00,337.00 256.50,337.96 257.00,338.89 257.50,339.81 258.00,340.71 258.50,341.58 259.00,342.44 259.50,343.27 260.00,344.08 260.50,344.87 261.00,345.64 261.50,346.39 262.00,347.11 262.50,347.82 263.00,348.50 263.50,349.15 264.00,349.79 264.50,350.40 265.00,350.99 265.50,351.56 266.00,352.10 266.50,352.62 267.00,353.12 267.50,353.59 268.00,354.04 268.50,354.46 269.00,354.87 269.50,355.24 270.00,355.60 270.50,355.93 271.00,356.23 271.50,356.52 272.00,356.77 272.50,357.01 273.00,357.21 273.50,357.40 274.00,357.56 274.50,357.69 275.00,357.80 275.50,357.89 276.00,357.95 276.50,357.99 277.00,358.00 277.50,357.99 278.00,357.95 278.50,357.89 279.00,357.80 279.50,357.69 280.00,357.56 280.50,357.40 281.00,357.21 281.50,357.01 282.00,356.77 282.50,356.52 283.00,356.23 283.50,355.93 284.00,355.60 284.50,355.24 285.00,354.87 285.50,354.46 286.00,354.04 286.50,353.59 287.00,353.12 287.50,352.62 288.00,352.10 288.50,351.56 289.00,350.99 289.50,350.40 290.00,349.79 290.50,349.15 291.00,348.50 291.50,347.82 292.00,347.11 292.50,346.39 293.00,345.64 293.50,344.87 294.00,344.08 294.50,343.27 295.00,342.44 295.50,341.58 296.00,340.71 296.50,339.81 297.00,338.89 297.50,337.96 298.00,337.00 298.50,336.02 299.00,335.02 299.50,334.01 300.00,332.97 300.50,331.92 301.00,330.84 301.50,329.75 302.00,328.64 302.50,327.51 303.00,326.36 303.50,325.20 304.00,324.01 304.50,322.81 305.00,321.60 305.50,320.37 306.00,319.12 306.50,317.85 307.00,316.57 307.50,315.27 308.00,313.96 308.50,312.63 309.00,311.29 309.50,309.94 310.00,308.57 310.50,307.19 311.00,305.79 311.50,304.38 312.00,302.96 312.50,301.52 313.00,300.07 313.50,298.61 314.00,297.14 314.50,295.66 315.00,294.17 315.50,292.66 316.00,291.15 316.50,289.63 317.00,288.09 317.50,286.55 318.00,285.00 318.50,283.44 319.00,281.87 319.50,280.29 320.00,278.71 320.50,277.12 321.00,275.52 321.50,273.92 322.00,272.31 322.50,270.69 323.00,269.07 323.50,267.44 324.00,265.81 324.50,264.18 325.00,262.54 325.50,260.89 326.00,259.25 326.50,257.60 327.00,255.95 327.50,254.29 328.00,252.63 328.50,250.98 329.00,249.32 329.50,247.66 330.00,246.00 330.50,244.34 331.00,242.68 331.50,241.02 332.00,239.37 332.50,237.71 333.00,236.05 333.50,234.40 334.00,232.75 334.50,231.11 335.00,229.46 335.50,227.82 336.00,226.19 336.50,224.56 337.00,222.93 337.50,221.31 338.00,219.69 338.50,218.08 339.00,216.48 339.50,214.88 340.00,213.29 340.50,211.71 341.00,210.13 341.50,208.56 342.00,207.00 342.50,205.45 343.00,203.91 343.50,202.37 344.00,200.85 344.50,199.34 345.00,197.83 345.50,196.34 346.00,194.86 346.50,193.39 347.00,191.93 347.50,190.48 348.00,189.04 348.50,187.62 349.00,186.21 349.50,184.81 350.00,183.43 350.50,182.06 351.00,180.71 351.50,179.37 352.00,178.04 352.50,176.73 353.00,175.43 353.50,174.15 354.00,172.88 354.50,171.63 355.00,170.40 355.50,169.19 356.00,167.99 356.50,166.80 357.00,165.64 357.50,164.49 358.00,163.36 358.50,162.25 359.00,161.16 359.50,160.08 360.00,159.03 360.50,157.99 361.00,156.98 361.50,155.98 362.00,155.00 362.50,154.04 363.00,153.11 363.50,152.19 364.00,151.29 364.50,150.42 365.00,149.56 365.50,148.73 366.00,147.92 366.50,147.13 367.00,146.36 367.50,145.61 368.00,144.89 368.50,144.18 369.00,143.50 369.50,142.85 370.00,142.21 370.50,141.60 371.00,141.01 371.50,140.44 372.00,139.90 372.50,139.38 373.00,138.88 373.50,138.41 374.00,137.96 374.50,137.54 375.00,137.13 375.50,136.76 376.00,136.40 376.50,136.07 377.00,135.77 377.50,135.48 378.00,135.23 378.50,134.99 379.00,134.79 379.50,134.60 380.00,134.44 380.50,134.31 381.00,134.20 381.50,134.11 382.00,134.05 382.50,134.01 383.00,134.00 383.50,134.01 384.00,134.05 384.50,134.11 385.00,134.20 385.50,134.31 386.00,134.44 386.50,134.60 387.00,134.79 387.50,134.99 388.00,135.23 388.50,135.48 389.00,135.77 389.50,136.07 390.00,136.40 390.50,136.76 391.00,137.13 391.50,137.54 392.00,137.96 392.50,138.41 393.00,138.88 393.50,139.38 394.00,139.90 394.50,140.44 395.00,141.01 395.50,141.60 396.00,142.21 396.50,142.85 397.00,143.50 397.50,144.18 398.00,144.89 398.50,145.61 399.00,146.36 399.50,147.13 400.00,147.92 400.50,148.73 401.00,149.56 401.50,150.42 402.00,151.29 402.50,152.19 403.00,153.11 403.50,154.04 404.00,155.00 404.50,155.98 405.00,156.98 405.50,157.99 406.00,159.03 406.50,160.08 407.00,161.16 407.50,162.25 408.00,163.36 408.50,164.49 409.00,165.64 409.50,166.80 410.00,167.99 410.50,169.19 411.00,170.40 411.50,171.63 412.00,172.88 412.50,174.15 413.00,175.43 413.50,176.73 414.00,178.04 414.50,179.37 415.00,180.71 415.50,182.06 416.00,183.43 416.50,184.81 417.00,186.21 417.50,187.62 418.00,189.04 418.50,190.48 419.00,191.93 419.50,193.39 420.00,194.86 420.50,196.34 421.00,197.83 421.50,199.34 422.00,200.85 422.50,202.37 423.00,203.91 423.50,205.45 424.00,207.00 424.50,208.56 425.00,210.13 425.50,211.71 426.00,213.29 426.50,214.88 427.00,216.48 427.50,218.08 428.00,219.69 428.50,221.31 429.00,222.93 429.50,224.56 430.00,226.19 430.50,227.82 431.00,229.46 431.50,231.11 432.00,232.75 432.50,234.40 433.00,236.05 433.50,237.71 434.00,239.37 434.50,241.02 435.00,242.68 435.50,244.34 436.00,246.00 436.50,247.66 437.00,249.32 437.50,250.98 438.00,252.63 438.50,254.29 439.00,255.95 439.50,257.60 440.00,259.25 440.50,260.89 441.00,262.54 441.50,264.18 442.00,265.81 442.50,267.44 443.00,269.07 443.50,270.69 444.00,272.31 444.50,273.92 445.00,275.52 445.50,277.12 446.00,278.71 446.50,280.29 447.00,281.87 447.50,283.44 448.00,285.00 448.50,286.55 449.00,288.09 449.50,289.63 450.00,291.15 450.50,292.66 451.00,294.17 451.50,295.66 452.00,297.14 452.50,298.61 453.00,300.07 453.50,301.52 454.00,302.96 454.50,304.38 455.00,305.79 455.50,307.19 456.00,308.57 456.50,309.94 457.00,311.29 457.50,312.63 458.00,313.96 458.50,315.27 459.00,316.57 459.50,317.85 460.00,319.12 460.50,320.37 461.00,321.60 461.50,322.81 462.00,324.01 462.50,325.20 463.00,326.36 463.50,327.51 464.00,328.64 464.50,329.75 465.00,330.84 465.50,331.92 466.00,332.97 466.50,334.01 467.00,335.02 467.50,336.02 468.00,337.00 468.50,337.96 469.00,338.89 469.50,339.81 470.00,340.71 470.50,341.58 471.00,342.44 471.50,343.27 472.00,344.08 472.50,344.87 473.00,345.64 473.50,346.39 474.00,347.11 474.50,347.82 475.00,348.50 475.50,349.15 476.00,349.79 476.50,350.40 477.00,350.99 477.50,351.56 478.00,352.10 478.50,352.62 479.00,353.12 479.50,353.59 480.00,354.04 480.50,354.46 481.00,354.87 481.50,355.24 482.00,355.60 482.50,355.93 483.00,356.23 483.50,356.52 484.00,356.77 484.50,357.01 485.00,357.21 485.50,357.40 486.00,357.56 486.50,357.69 487.00,357.80 487.50,357.89 488.00,357.95 488.50,357.99 489.00,358.00 489.50,357.99 490.00,357.95 490.50,357.89 491.00,357.80 491.50,357.69 492.00,357.56 492.50,357.40 493.00,357.21 493.50,357.01 494.00,356.77 494.50,356.52 495.00,356.23 495.50,355.93 496.00,355.60 496.50,355.24 497.00,354.87 497.50,354.46 498.00,354.04 498.50,353.59 499.00,353.12 499.50,352.62 500.00,352.10 500.50,351.56 501.00,350.99 501.50,350.40 502.00,349.79 502.50,349.15 503.00,348.50 503.50,347.82 504.00,347.11 504.50,346.39 505.00,345.64 505.50,344.87 506.00,344.08 506.50,343.27 507.00,342.44 507.50,341.58 508.00,340.71 508.50,339.81 509.00,338.89 509.50,337.96 510.00,337.00 510.50,336.02 511.00,335.02 511.50,334.01 512.00,332.97 512.50,331.92 513.00,330.84 513.50,329.75 514.00,328.64 514.50,327.51 515.00,326.36 515.50,325.20 516.00,324.01 516.50,322.81 517.00,321.60 517.50,320.37 518.00,319.12 518.50,317.85 519.00,316.57 519.50,315.27 520.00,313.96 520.50,312.63 521.00,311.29 521.50,309.94 522.00,308.57 522.50,307.19 523.00,305.79 523.50,304.38 524.00,302.96 524.50,301.52 525.00,300.07 525.50,298.61 526.00,297.14 526.50,295.66 527.00,294.17"/>
<polyline fill="none" stroke="#20a028" stroke-width="2.2" shape-rendering="crispEdges" points="8.00,287.97 8.50,289.80 9.00,291.61 9.50,293.40 10.00,295.17 10.50,296.91 11.00,298.63 11.50,300.33 12.00,302.00 12.50,303.65 13.00,305.27 13.50,306.87 14.00,308.44 14.50,309.98 15.00,311.50 15.50,313.00 16.00,314.46 16.50,315.90 17.00,317.32 17.50,318.70 18.00,320.06 18.50,321.39 19.00,322.69 19.50,323.97 20.00,325.22 20.50,326.44 21.00,327.63 21.50,328.80 22.00,329.93 22.50,331.04 23.00,332.13 23.50,333.18 24.00,334.21 24.50,335.21 25.00,336.18 25.50,337.13 26.00,338.05 26.50,338.94 27.00,339.81 27.50,340.65 28.00,341.47 28.50,342.26 29.00,343.02 29.50,343.76 30.00,344.47 30.50,345.16 31.00,345.83 31.50,346.47 32.00,347.09 32.50,347.69 33.00,348.26 33.50,348.81 34.00,349.34 34.50,349.85 35.00,350.34 35.50,350.80 36.00,351.25 36.50,351.68 37.00,352.08 37.50,352.47 38.00,352.84 38.50,353.20 39.00,353.53 39.50,353.85 40.00,354.15 40.50,354.44 41.00,354.71 41.50,354.96 42.00,355.20 42.50,355.43 43.00,355.64 43.50,355.84 44.00,356.03 44.50,356.21 45.00,356.37 45.50,356.52 46.00,356.66 46.50,356.80 47.00,356.92 47.50,357.03 48.00,357.14 48.50,357.23 49.00,357.32 49.50,357.40 50.00,357.47 50.50,357.54 51.00,357.60 51.50,357.65 52.00,357.70 52.50,357.74 53.00,357.78 53.50,357.81 54.00,357.84 54.50,357.87 55.00,357.89 55.50,357.91 56.00,357.93 56.50,357.94 57.00,357.96 57.50,357.97 58.00,357.97 58.50,357.98 59.00,357.99 59.50,357.99 60.00,357.99 60.50,358.00 61.00,358.00 61.50,358.00 62.00,358.00 62.50,358.00 63.00,358.00 63.50,358.00 64.00,358.00 64.50,358.00 65.00,358.00 65.50,358.00 66.00,358.00 66.50,358.00 67.00,358.00 67.50,358.00 68.00,358.00 68.50,358.00 69.00,358.00 69.50,358.00 70.00,357.99 70.50,357.99 71.00,357.99 71.50,357.98 72.00,357.97 72.50,357.97 73.00,357.96 73.50,357.94 74.00,357.93 74.50,357.91 75.00,357.89 75.50,357.87 76.00,357.84 76.50,357.81 77.00,357.78 77.50,357.74 78.00,357.70 78.50,357.65 79.00,357.60 79.50,357.54 80.00,357.47 80.50,357.40 81.00,357.32 81.50,357.23 82.00,357.14 82.50,357.03 83.00,356.92 83.50,356.80 84.00,356.66 84.50,356.52 85.00,356.37 85.50,356.21 86.00,356.03 86.50,355.84 87.00,355.64 87.50,355.43 88.00,355.20 88.50,354.96 89.00,354.71 89.50,354.44 90.00,354.15 90.50,353.85 91.00,353.53 91.50,353.20 92.00,352.84 92.50,352.47 93.00,352.08 93.50,351.68 94.00,351.25 94.50,350.80 95.00,350.34 95.50,349.85 96.00,349.34 96.50,348.81 97.00,348.26 97.50,347.69 98.00,347.09 98.50,346.47 99.00,345.83 99.50,345.16 100.00,344.47 100.50,343.76 101.00,343.02 101.50,342.26 102.00,341.47 102.50,340.65 103.00,339.81 103.50,338.94 104.00,338.05 104.50,337.13 105.00,336.18 105.50,335.21 106.00,334.21 106.50,333.18 107.00,332.13 107.50,331.04 108.00,329.93 108.50,328.80 109.00,327.63 109.50,326.44 110.00,325.22 110.50,323.97 111.00,322.69 111.50,321.39 112.00,320.06 112.50,318.70 113.00,317.32 113.50,315.90 114.00,314.46 114.50,313.00 115.00,311.50 115.50,309.98 116.00,308.44 116.50,306.87 117.00,305.27 117.50,303.65 118.00,302.00 118.50,300.33 119.00,298.63 119.50,296.91 120.00,295.17 120.50,293.40 121.00,291.61 121.50,289.80 122.00,287.97 122.50,286.12 123.00,284.24 123.50,282.35 124.00,280.44 124.50,278.50 125.00,276.55 125.50,274.59 126.00,272.60 126.50,270.60 127.00,268.59 127.50,266.56 128.00,264.51 128.50,262.46 129.00,260.39 129.50,258.30 130.00,256.21 130.50,254.11 131.00,252.00 131.50,249.88 132.00,247.75 132.50,245.62 133.00,243.48 133.50,241.33 134.00,239.18 134.50,237.03 135.00,234.87 135.50,232.72 136.00,230.56 136.50,228.41 137.00,226.25 137.50,224.10 138.00,221.95 138.50,219.81 139.00,217.67 139.50,215.54 140.00,213.42 140.50,211.30 141.00,209.20 141.50,207.10 142.00,205.02 142.50,202.95 143.00,200.89 143.50,198.84 144.00,196.82 144.50,194.80 145.00,192.81 145.50,190.83 146.00,188.88 146.50,186.94 147.00,185.02 147.50,183.13 148.00,181.26 148.50,179.42 149.00,177.60 149.50,175.80 150.00,174.03 150.50,172.29 151.00,170.58 151.50,168.90 152.00,167.25 152.50,165.63 153.00,164.04 153.50,162.49 154.00,160.97 154.50,159.49 155.00,158.03 155.50,156.62 156.00,155.24 156.50,153.90 157.00,152.60 157.50,151.34 158.00,150.12 158.50,148.94 159.00,147.80 159.50,146.70 160.00,145.64 160.50,144.63 161.00,143.66 161.50,142.73 162.00,141.85 162.50,141.01 163.00,140.22 163.50,139.48 164.00,138.78 164.50,138.12 165.00,137.52 165.50,136.96 166.00,136.45 166.50,135.98 167.00,135.57 167.50,135.20 168.00,134.88 168.50,134.61 169.00,134.39 169.50,134.22 170.00,134.10 170.50,134.02 171.00,134.00 171.50,134.02 172.00,134.10 172.50,134.22 173.00,134.39 173.50,134.61 174.00,134.88 174.50,135.20 175.00,135.57 175.50,135.98 176.00,136.45 176.50,136.96 177.00,137.52 177.50,138.12 178.00,138.78 178.50,139.48 179.00,140.22 179.50,141.01 180.00,141.85 180.50,142.73 181.00,143.66 181.50,144.63 182.00,145.64 182.50,146.70 183.00,147.80 183.50,148.94 184.00,150.12 184.50,151.34 185.00,152.60 185.50,153.90 186.00,155.24 186.50,156.62 187.00,158.03 187.50,159.49 188.00,160.97 188.50,162.49 189.00,164.04 189.50,165.63 190.00,167.25 190.50,168.90 191.00,170.58 191.50,172.29 192.00,174.03 192.50,175.80 193.00,177.60 193.50,179.42 194.00,181.26 194.50,183.13 195.00,185.02 195.50,186.94 196.00,188.88 196.50,190.83 197.00,192.81 197.50,194.80 198.00,196.82 198.50,198.84 199.00,200.89 199.50,202.95 200.00,205.02 200.50,207.10 201.00,209.20 201.50,211.30 202.00,213.42 202.50,215.54 203.00,217.67 203.50,219.81 204.00,221.95 204.50,224.10 205.00,226.25 205.50,228.41 206.00,230.56 206.50,232.72 207.00,234.87 207.50,237.03 208.00,239.18 208.50,241.33 209.00,243.48 209.50,245.62 210.00,247.75 210.50,249.88 211.00,252.00 211.50,254.11 212.00,256.21 212.50,258.30 213.00,260.39 213.50,262.46 214.00,264.51 214.50,266.56 215.00,268.59 215.50,270.60 216.00,272.60 216.50,274.59 217.00,276.55 217.50,278.50 218.00,280.44 218.50,282.35 219.00,284.24 219.50,286.12 220.00,287.97 220.50,289.80 221.00,291.61 221.50,293.40 222.00,295.17 222.50,296.91 223.00,298.63 223.50,300.33 224.00,302.00 224.50,303.65 225.00,305.27 225.50,306.87 226.00,308.44 226.50,309.98 227.00,311.50 227.50,313.00 228.00,314.46 228.50,315.90 229.00,317.32 229.50,318.70 230.00,320.06 230.50,321.39 231.00,322.69 231.50,323.97 232.00,325.22 232.50,326.44 233.00,327.63 233.50,328.80 234.00,329.93 234.50,331.04 235.00,332.13 235.50,333.18 236.00,334.21 236.50,335.21 237.00,336.18 237.50,337.13 238.00,338.05 238.50,338.94 239.00,339.81 239.50,340.65 240.00,341.47 240.50,342.26 241.00,343.02 241.50,343.76 242.00,344.47 242.50,345.16 243.00,345.83 243.50,346.47 244.00,347.09 244.50,347.69 245.00,348.26 245.50,348.81 246.00,349.34 246.50,349.85 247.00,350.34 247.50,350.80 248.00,351.25 248.50,351.68 249.00,352.08 249.50,352.47 250.00,352.84 250.50,353.20 251.00,353.53 251.50,353.85 252.00,354.15 252.50,354.44 253.00,354.71 253.50,354.96 254.00,355.20 254.50,355.43 255.00,355.64 255.50,355.84 256.00,356.03 256.50,356.21 257.00,356.37 257.50,356.52 258.00,356.66 258.50,356.80 259.00,356.92 259.50,357.03 260.00,357.14 260.50,357.23 261.00,357.32 261.50,357.40 262.00,357.47 262.50,357.54 263.00,357.60 263.50,357.65 264.00,357.70 264.50,357.74 265.00,357.78 265.50,357.81 266.00,357.84 266.50,357.87 267.00,357.89 267.50,357.91 268.00,357.93 268.50,357.94 269.00,357.96 269.50,357.97 270.00,357.97 270.50,357.98 271.00,357.99 271.50,357.99 272.00,357.99 272.50,358.00 273.00,358.00 273.50,358.00 274.00,358.00 274.50,358.00 275.00,358.00 275.50,358.00 276.00,358.00 276.50,358.00 277.00,358.00 277.50,358.00 278.00,358.00 278.50,358.00 279.00,358.00 279.50,358.00 280.00,358.00 280.50,358.00 281.00,358.00 281.50,358.00 282.00,357.99 282.50,357.99 283.00,357.99 283.50,357.98 284.00,357.97 284.50,357.97 285.00,357.96 285.50,357.94 286.00,357.93 286.50,357.91 287.00,357.89 287.50,357.87 288.00,357.84 288.50,357.81 289.00,357.78 289.50,357.74 290.00,357.70 290.50,357.65 291.00,357.60 291.50,357.54 292.00,357.47 292.50,357.40 293.00,357.32 293.50,357.23 294.00,357.14 294.50,357.03 295.00,356.92 295.50,356.80 296.00,356.66 296.50,356.52 297.00,356.37 297.50,356.21 298.00,356.03 298.50,355.84 299.00,355.64 299.50,355.43 300.00,355.20 300.50,354.96 301.00,354.71 301.50,354.44 302.00,354.15 302.50,353.85 303.00,353.53 303.50,353.20 304.00,352.84 304.50,352.47 305.00,352.08 305.50,351.68 306.00,351.25 306.50,350.80 307.00,350.34 307.50,349.85 308.00,349.34 308.50,348.81 309.00,348.26 309.50,347.69 310.00,347.09 310.50,346.47 311.00,345.83 311.50,345.16 312.00,344.47 312.50,343.76 313.00,343.02 313.50,342.26 314.00,341.47 314.50,340.65 315.00,339.81 315.50,338.94 316.00,338.05 316.50,337.13 317.00,336.18 317.50,335.21 318.00,334.21 318.50,333.18 319.00,332.13 319.50,331.04 320.00,329.93 320.50,328.80 321.00,327.63 321.50,326.44 322.00,325.22 322.50,323.97 323.00,322.69 323.50,321.39 324.00,320.06 324.50,318.70 325.00,317.32 325.50,315.90 326.00,314.46 326.50,313.00 327.00,311.50 327.50,309.98 328.00,308.44 328.50,306.87 329.00,305.27 329.50,303.65 330.00,302.00 330.50,300.33 331.00,298.63 331.50,296.91 332.00,295.17 332.50,293.40 333.00,291.61 333.50,289.80 334.00,287.97 334.50,286.12 335.00,284.24 335.50,282.35 336.00,280.44 336.50,278.50 337.00,276.55 337.50,274.59 338.00,272.60 338.50,270.60 339.00,268.59 339.50,266.56 340.00,264.51 340.50,262.46 341.00,260.39 341.50,258.30 342.00,256.21 342.50,254.11 343.00,252.00 343.50,249.88 344.00,247.75 344.50,245.62 345.00,243.48 345.50,241.33 346.00,239.18 346.50,237.03 347.00,234.87 347.50,232.72 348.00,230.56 348.50,228.41 349.00,226.25 349.50,224.10 350.00,221.95 350.50,219.81 351.00,217.67 351.50,215.54 352.00,213.42 352.50,211.30 353.00,209.20 353.50,207.10 354.00,205.02 354.50,202.95 355.00,200.89 355.50,198.84 356.00,196.82 356.50,194.80 357.00,192.81 357.50,190.83 358.00,188.88 358.50,186.94 359.00,185.02 359.50,183.13 360.00,181.26 360.50,179.42 361.00,177.60 361.50,175.80 362.00,174.03 362.50,172.29 363.00,170.58 363.50,168.90 364.00,167.25 364.50,165.63 365.00,164.04 365.50,162.49 366.00,160.97 366.50,159.49 367.00,158.03 367.50,156.62 368.00,155.24 368.50,153.90 369.00,152.60 369.50,151.34 370.00,150.12 370.50,148.94 371.00,147.80 371.50,146.70 372.00,145.64 372.50,144.63 373.00,143.66 373.50,142.73 374.00,141.85 374.50,141.01 375.00,140.22 375.50,139.48 376.00,138.78 376.50,138.12 377.00,137.52 377.50,136.96 378.00,136.45 378.50,135.98 379.00,135.57 379.50,135.20 380.00,134.88 380.50,134.61 381.00,134.39 381.50,134.22 382.00,134.10 382.50,134.02 383.00,134.00 383.50,134.02 384.00,134.10 384.50,134.22 385.00,134.39 385.50,134.61 386.00,134.88 386.50,135.20 387.00,135.57 387.50,135.98 388.00,136.45 388.50,136.96 389.00,137.52 389.50,138.12 390.00,138.78 390.50,139.48 391.00,140.22 391.50,141.01 392.00,141.85 392.50,142.73 393.00,143.66 393.50,144.63 394.00,145.64 394.50,146.70 395.00,147.80 395.50,148.94 396.00,150.12 396.50,151.34 397.00,152.60 397.50,153.90 398.00,155.24 398.50,156.62 399.00,158.03 399.50,159.49 400.00,160.97 400.50,162.49 401.00,164.04 401.50,165.63 402.00,167.25 402.50,168.90 403.00,170.58 403.50,172.29 404.00,174.03 404.50,175.80 405.00,177.60 405.50,179.42 406.00,181.26 406.50,183.13 407.00,185.02 407.50,186.94 408.00,188.88 408.50,190.83 409.00,192.81 409.50,194.80 410.00,196.82 410.50,198.84 411.00,200.89 411.50,202.95 412.00,205.02 412.50,207.10 413.00,209.20 413.50,211.30 414.00,213.42 414.50,215.54 415.00,217.67 415.50,219.81 416.00,221.95 416.50,224.10 417.00,226.25 417.50,228.41 418.00,230.56 418.50,232.72 419.00,234.87 419.50,237.03 420.00,239.18 420.50,241.33 421.00,243.48 421.50,245.62 422.00,247.75 422.50,249.88 423.00,252.00 423.50,254.11 424.00,256.21 424.50,258.30 425.00,260.39 425.50,262.46 426.00,264.51 426.50,266.56 427.00,268.59 427.50,270.60 428.00,272.60 428.50,274.59 429.00,276.55 429.50,278.50 430.00,280.44 430.50,282.35 431.00,284.24 431.50,286.12 432.00,287.97 432.50,289.80 433.00,291.61 433.50,293.40 434.00,295.17 434.50,296.91 435.00,298.63 435.50,300.33 436.00,302.00 436.50,303.65 437.00,305.27 437.50,306.87 438.00,308.44 438.50,309.98 439.00,311.50 439.50,313.00 440.00,314.46 440.50,315.90 441.00,317.32 441.50,318.70 442.00,320.06 442.50,321.39 443.00,322.69 443.50,323.97 444.00,325.22 444.50,326.44 445.00,327.63 445.50,328.80 446.00,329.93 446.50,331.04 447.00,332.13 447.50,333.18 448.00,334.21 448.50,335.21 449.00,336.18 449.50,337.13 450.00,338.05 450.50,338.94 451.00,339.81 451.50,340.65 452.00,341.47 452.50,342.26 453.00,343.02 453.50,343.76 454.00,344.47 454.50,345.16 455.00,345.83 455.50,346.47 456.00,347.09 456.50,347.69 457.00,348.26 457.50,348.81 458.00,349.34 458.50,349.85 459.00,350.34 459.50,350.80 460.00,351.25 460.50,351.68 461.00,352.08 461.50,352.47 462.00,352.84 462.50,353.20 463.00,353.53 463.50,353.85 464.00,354.15 464.50,354.44 465.00,354.71 465.50,354.96 466.00,355.20 466.50,355.43 467.00,355.64 467.50,355.84 468.00,356.03 468.50,356.21 469.00,356.37 469.50,356.52 470.00,356.66 470.50,356.80 471.00,356.92 471.50,357.03 472.00,357.14 472.50,357.23 473.00,357.32 473.50,357.40 474.00,357.47 474.50,357.54 475.00,357.60 475.50,357.65 476.00,357.70 476.50,357.74 477.00,357.78 477.50,357.81 478.00,357.84 478.50,357.87 479.00,357.89 479.50,357.91 480.00,357.93 480.50,357.94 481.00,357.96 481.50,357.97 482.00,357.97 482.50,357.98 483.00,357.99 483.50,357.99 484.00,357.99 484.50,358.00 485.00,358.00 485.50,358.00 486.00,358.00 486.50,358.00 487.00,358.00 487.50,358.00 488.00,358.00 488.50,358.00 489.00,358.00 489.50,358.00 490.00,358.00 490.50,358.00 491.00,358.00 491.50,358.00 492.00,358.00 492.50,358.00 493.00,358.00 493.50,358.00 494.00,357.99 494.50,357.99 495.00,357.99 495.50,357.98 496.00,357.97 496.50,357.97 497.00,357.96 497.50,357.94 498.00,357.93 498.50,357.91 499.00,357.89 499.50,357.87 500.00,357.84 500.50,357.81 501.00,357.78 501.50,357.74 502.00,357.70 502.50,357.65 503.00,357.60 503.50,357.54 504.00,357.47 504.50,357.40 505.00,357.32 505.50,357.23 506.00,357.14 506.50,357.03 507.00,356.92 507.50,356.80 508.00,356.66 508.50,356.52 509.00,356.37 509.50,356.21 510.00,356.03 510.50,355.84 511.00,355.64 511.50,355.43 512.00,355.20 512.50,354.96 513.00,354.71 513.50,354.44 514.00,354.15 514.50,353.85 515.00,353.53 515.50,353.20 516.00,352.84 516.50,352.47 517.00,352.08 517.50,351.68 518.00,351.25 518.50,350.80 519.00,350.34 519.50,349.85 520.00,349.34 520.50,348.81 521.00,348.26 521.50,347.69 522.00,347.09 522.50,346.47 523.00,345.83 523.50,345.16 524.00,344.47 524.50,343.76 525.00,343.02 525.50,342.26 526.00,341.47 526.50,340.65 527.00,339.81"/>
<polyline fill="none" stroke="#9830c0" stroke-width="2.2" shape-rendering="crispEdges" points="8.00,345.76 8.50,346.54 9.00,347.29 9.50,348.00 10.00,348.67 10.50,349.30 11.00,349.90 11.50,350.47 12.00,351.00 12.50,351.50 13.00,351.98 13.50,352.42 14.00,352.84 14.50,353.23 15.00,353.60 15.50,353.95 16.00,354.27 16.50,354.57 17.00,354.85 17.50,355.11 18.00,355.36 18.50,355.58 19.00,355.79 19.50,355.98 20.00,356.16 20.50,356.33 21.00,356.48 21.50,356.63 22.00,356.76 22.50,356.87 23.00,356.98 23.50,357.08 24.00,357.18 24.50,357.26 25.00,357.34 25.50,357.41 26.00,357.47 26.50,357.53 27.00,357.58 27.50,357.63 28.00,357.67 28.50,357.71 29.00,357.74 29.50,357.77 30.00,357.80 30.50,357.82 31.00,357.85 31.50,357.87 32.00,357.88 32.50,357.90 33.00,357.91 33.50,357.92 34.00,357.93 34.50,357.94 35.00,357.95 35.50,357.96 36.00,357.96 36.50,357.97 37.00,357.97 37.50,357.98 38.00,357.98 38.50,357.98 39.00,357.99 39.50,357.99 40.00,357.99 40.50,357.99 41.00,357.99 41.50,358.00 42.00,358.00 42.50,358.00 43.00,358.00 43.50,358.00 44.00,358.00 44.50,358.00 45.00,358.00 45.50,358.00 46.00,358.00 46.50,358.00 47.00,358.00 47.50,358.00 48.00,358.00 48.50,358.00 49.00,358.00 49.50,358.00 50.00,358.00 50.50,358.00 51.00,358.00 51.50,358.00 52.00,358.00 52.50,358.00 53.00,358.00 53.50,358.00 54.00,358.00 54.50,358.00 55.00,358.00 55.50,358.00 56.00,358.00 56.50,358.00 57.00,358.00 57.50,358.00 58.00,358.00 58.50,358.00 59.00,358.00 59.50,358.00 60.00,358.00 60.50,358.00 61.00,358.00 61.50,358.00 62.00,358.00 62.50,358.00 63.00,358.00 63.50,358.00 64.00,358.00 64.50,358.00 65.00,358.00 65.50,358.00 66.00,358.00 66.50,358.00 67.00,358.00 67.50,358.00 68.00,358.00 68.50,358.00 69.00,358.00 69.50,358.00 70.00,358.00 70.50,358.00 71.00,358.00 71.50,358.00 72.00,358.00 72.50,358.00 73.00,358.00 73.50,358.00 74.00,358.00 74.50,358.00 75.00,358.00 75.50,358.00 76.00,358.00 76.50,358.00 77.00,358.00 77.50,358.00 78.00,358.00 78.50,358.00 79.00,358.00 79.50,358.00 80.00,358.00 80.50,358.00 81.00,358.00 81.50,358.00 82.00,358.00 82.50,358.00 83.00,358.00 83.50,358.00 84.00,358.00 84.50,358.00 85.00,358.00 85.50,358.00 86.00,358.00 86.50,358.00 87.00,358.00 87.50,358.00 88.00,358.00 88.50,358.00 89.00,357.99 89.50,357.99 90.00,357.99 90.50,357.99 91.00,357.99 91.50,357.98 92.00,357.98 92.50,357.98 93.00,357.97 93.50,357.97 94.00,357.96 94.50,357.96 95.00,357.95 95.50,357.94 96.00,357.93 96.50,357.92 97.00,357.91 97.50,357.90 98.00,357.88 98.50,357.87 99.00,357.85 99.50,357.82 100.00,357.80 100.50,357.77 101.00,357.74 101.50,357.71 102.00,357.67 102.50,357.63 103.00,357.58 103.50,357.53 104.00,357.47 104.50,357.41 105.00,357.34 105.50,357.26 106.00,357.18 106.50,357.08 107.00,356.98 107.50,356.87 108.00,356.76 108.50,356.63 109.00,356.48 109.50,356.33 110.00,356.16 110.50,355.98 111.00,355.79 111.50,355.58 112.00,355.36 112.50,355.11 113.00,354.85 113.50,354.57 114.00,354.27 114.50,353.95 115.00,353.60 115.50,353.23 116.00,352.84 116.50,352.42 117.00,351.98 117.50,351.50 118.00,351.00 118.50,350.47 119.00,349.90 119.50,349.30 120.00,348.67 120.50,348.00 121.00,347.29 121.50,346.54 122.00,345.76 122.50,344.93 123.00,344.06 123.50,343.15 124.00,342.20 124.50,341.19 125.00,340.14 125.50,339.05 126.00,337.90 126.50,336.70 127.00,335.45 127.50,334.15 128.00,332.79 128.50,331.38 129.00,329.92 129.50,328.40 130.00,326.82 130.50,325.19 131.00,323.49 131.50,321.74 132.00,319.93 132.50,318.06 133.00,316.13 133.50,314.14 134.00,312.10 134.50,309.99 135.00,307.82 135.50,305.60 136.00,303.31 136.50,300.97 137.00,298.57 137.50,296.12 138.00,293.61 138.50,291.04 139.00,288.42 139.50,285.75 140.00,283.03 140.50,280.25 141.00,277.43 141.50,274.57 142.00,271.66 142.50,268.70 143.00,265.71 143.50,262.68 144.00,259.61 144.50,256.52 145.00,253.39 145.50,250.23 146.00,247.05 146.50,243.84 147.00,240.62 147.50,237.38 148.00,234.13 148.50,230.87 149.00,227.61 149.50,224.34 150.00,221.08 150.50,217.82 151.00,214.57 151.50,211.33 152.00,208.11 152.50,204.91 153.00,201.73 153.50,198.58 154.00,195.46 154.50,192.38 155.00,189.34 155.50,186.34 156.00,183.39 156.50,180.50 157.00,177.65 157.50,174.87 158.00,172.15 158.50,169.50 159.00,166.92 159.50,164.41 160.00,161.98 160.50,159.64 161.00,157.37 161.50,155.20 162.00,153.12 162.50,151.13 163.00,149.23 163.50,147.44 164.00,145.75 164.50,144.17 165.00,142.69 165.50,141.33 166.00,140.07 166.50,138.93 167.00,137.90 167.50,136.99 168.00,136.20 168.50,135.53 169.00,134.98 169.50,134.55 170.00,134.25 170.50,134.06 171.00,134.00 171.50,134.06 172.00,134.25 172.50,134.55 173.00,134.98 173.50,135.53 174.00,136.20 174.50,136.99 175.00,137.90 175.50,138.93 176.00,140.07 176.50,141.33 177.00,142.69 177.50,144.17 178.00,145.75 178.50,147.44 179.00,149.23 179.50,151.13 180.00,153.12 180.50,155.20 181.00,157.37 181.50,159.64 182.00,161.98 182.50,164.41 183.00,166.92 183.50,169.50 184.00,172.15 184.50,174.87 185.00,177.65 185.50,180.50 186.00,183.39 186.50,186.34 187.00,189.34 187.50,192.38 188.00,195.46 188.50,198.58 189.00,201.73 189.50,204.91 190.00,208.11 190.50,211.33 191.00,214.57 191.50,217.82 192.00,221.08 192.50,224.34 193.00,227.61 193.50,230.87 194.00,234.13 194.50,237.38 195.00,240.62 195.50,243.84 196.00,247.05 196.50,250.23 197.00,253.39 197.50,256.52 198.00,259.61 198.50,262.68 199.00,265.71 199.50,268.70 200.00,271.66 200.50,274.57 201.00,277.43 201.50,280.25 202.00,283.03 202.50,285.75 203.00,288.42 203.50,291.04 204.00,293.61 204.50,296.12 205.00,298.57 205.50,300.97 206.00,303.31 206.50,305.60 207.00,307.82 207.50,309.99 208.00,312.10 208.50,314.14 209.00,316.13 209.50,318.06 210.00,319.93 210.50,321.74 211.00,323.49 211.50,325.19 212.00,326.82 212.50,328.40 213.00,329.92 213.50,331.38 214.00,332.79 214.50,334.15 215.00,335.45 215.50,336.70 216.00,337.90 216.50,339.05 217.00,340.14 217.50,341.19 218.00,342.20 218.50,343.15 219.00,344.06 219.50,344.93 220.00,345.76 220.50,346.54 221.00,347.29 221.50,348.00 222.00,348.67 222.50,349.30 223.00,349.90 223.50,350.47 224.00,351.00 224.50,351.50 225.00,351.98 225.50,352.42 226.00,352.84 226.50,353.23 227.00,353.60 227.50,353.95 228.00,354.27 228.50,354.57 229.00,354.85 229.50,355.11 230.00,355.36 230.50,355.58 231.00,355.79 231.50,355.98 232.00,356.16 232.50,356.33 233.00,356.48 233.50,356.63 234.00,356.76 234.50,356.87 235.00,356.98 235.50,357.08 236.00,357.18 236.50,357.26 237.00,357.34 237.50,357.41 238.00,357.47 238.50,357.53 239.00,357.58 239.50,357.63 240.00,357.67 240.50,357.71 241.00,357.74 241.50,357.77 242.00,357.80 242.50,357.82 243.00,357.85 243.50,357.87 244.00,357.88 244.50,357.90 245.00,357.91 245.50,357.92 246.00,357.93 246.50,357.94 247.00,357.95 247.50,357.96 248.00,357.96 248.50,357.97 249.00,357.97 249.50,357.98 250.00,357.98 250.50,357.98 251.00,357.99 251.50,357.99 252.00,357.99 252.50,357.99 253.00,357.99 253.50,358.00 254.00,358.00 254.50,358.00 255.00,358.00 255.50,358.00 256.00,358.00 256.50,358.00 257.00,358.00 257.50,358.00 258.00,358.00 258.50,358.00 259.00,358.00 259.50,358.00 260.00,358.00 260.50,358.00 261.00,358.00 261.50,358.00 262.00,358.00 262.50,358.00 263.00,358.00 263.50,358.00 264.00,358.00 264.50,358.00 265.00,358.00 265.50,358.00 266.00,358.00 266.50,358.00 267.00,358.00 267.50,358.00 268.00,358.00 268.50,358.00 269.00,358.00 269.50,358.00 270.00,358.00 270.50,358.00 271.00,358.00 271.50,358.00 272.00,358.00 272.50,358.00 273.00,358.00 273.50,358.00 274.00,358.00 274.50,358.00 275.00,358.00 275.50,358.00 276.00,358.00 276.50,358.00 277.00,358.00 277.50,358.00 278.00,358.00 278.50,358.00 279.00,358.00 279.50,358.00 280.00,358.00 280.50,358.00 281.00,358.00 281.50,358.00 282.00,358.00 282.50,358.00 283.00,358.00 283.50,358.00 284.00,358.00 284.50,358.00 285.00,358.00 285.50,358.00 286.00,358.00 286.50,358.00 287.00,358.00 287.50,358.00 288.00,358.00 288.50,358.00 289.00,358.00 289.50,358.00 290.00,358.00 290.50,358.00 291.00,358.00 291.50,358.00 292.00,358.00 292.50,358.00 293.00,358.00 293.50,358.00 294.00,358.00 294.50,358.00 295.00,358.00 295.50,358.00 296.00,358.00 296.50,358.00 297.00,358.00 297.50,358.00 298.00,358.00 298.50,358.00 299.00,358.00 299.50,358.00 300.00,358.00 300.50,358.00 301.00,357.99 301.50,357.99 302.00,357.99 302.50,357.99 303.00,357.99 303.50,357.98 304.00,357.98 304.50,357.98 305.00,357.97 305.50,357.97 306.00,357.96 306.50,357.96 307.00,357.95 307.50,357.94 308.00,357.93 308.50,357.92 309.00,357.91 309.50,357.90 310.00,357.88 310.50,357.87 311.00,357.85 311.50,357.82 312.00,357.80 312.50,357.77 313.00,357.74 313.50,357.71 314.00,357.67 314.50,357.63 315.00,357.58 315.50,357.53 316.00,357.47 316.50,357.41 317.00,357.34 317.50,357.26 318.00,357.18 318.50,357.08 319.00,356.98 319.50,356.87 320.00,356.76 320.50,356.63 321.00,356.48 321.50,356.33 322.00,356.16 322.50,355.98 323.00,355.79 323.50,355.58 324.00,355.36 324.50,355.11 325.00,354.85 325.50,354.57 326.00,354.27 326.50,353.95 327.00,353.60 327.50,353.23 328.00,352.84 328.50,352.42 329.00,351.98 329.50,351.50 330.00,351.00 330.50,350.47 331.00,349.90 331.50,349.30 332.00,348.67 332.50,348.00 333.00,347.29 333.50,346.54 334.00,345.76 334.50,344.93 335.00,344.06 335.50,343.15 336.00,342.20 336.50,341.19 337.00,340.14 337.50,339.05 338.00,337.90 338.50,336.70 339.00,335.45 339.50,334.15 340.00,332.79 340.50,331.38 341.00,329.92 341.50,328.40 342.00,326.82 342.50,325.19 343.00,323.49 343.50,321.74 344.00,319.93 344.50,318.06 345.00,316.13 345.50,314.14 346.00,312.10 346.50,309.99 347.00,307.82 347.50,305.60 348.00,303.31 348.50,300.97 349.00,298.57 349.50,296.12 350.00,293.61 350.50,291.04 351.00,288.42 351.50,285.75 352.00,283.03 352.50,280.25 353.00,277.43 353.50,274.57 354.00,271.66 354.50,268.70 355.00,265.71 355.50,262.68 356.00,259.61 356.50,256.52 357.00,253.39 357.50,250.23 358.00,247.05 358.50,243.84 359.00,240.62 359.50,237.38 360.00,234.13 360.50,230.87 361.00,227.61 361.50,224.34 362.00,221.08 362.50,217.82 363.00,214.57 363.50,211.33 364.00,208.11 364.50,204.91 365.00,201.73 365.50,198.58 366.00,195.46 366.50,192.38 367.00,189.34 367.50,186.34 368.00,183.39 368.50,180.50 369.00,177.65 369.50,174.87 370.00,172.15 370.50,169.50 371.00,166.92 371.50,164.41 372.00,161.98 372.50,159.64 373.00,157.37 373.50,155.20 374.00,153.12 374.50,151.13 375.00,149.23 375.50,147.44 376.00,145.75 376.50,144.17 377.00,142.69 377.50,141.33 378.00,140.07 378.50,138.93 379.00,137.90 379.50,136.99 380.00,136.20 380.50,135.53 381.00,134.98 381.50,134.55 382.00,134.25 382.50,134.06 383.00,134.00 383.50,134.06 384.00,134.25 384.50,134.55 385.00,134.98 385.50,135.53 386.00,136.20 386.50,136.99 387.00,137.90 387.50,138.93 388.00,140.07 388.50,141.33 389.00,142.69 389.50,144.17 390.00,145.75 390.50,147.44 391.00,149.23 391.50,151.13 392.00,153.12 392.50,155.20 393.00,157.37 393.50,159.64 394.00,161.98 394.50,164.41 395.00,166.92 395.50,169.50 396.00,172.15 396.50,174.87 397.00,177.65 397.50,180.50 398.00,183.39 398.50,186.34 399.00,189.34 399.50,192.38 400.00,195.46 400.50,198.58 401.00,201.73 401.50,204.91 402.00,208.11 402.50,211.33 403.00,214.57 403.50,217.82 404.00,221.08 404.50,224.34 405.00,227.61 405.50,230.87 406.00,234.13 406.50,237.38 407.00,240.62 407.50,243.84 408.00,247.05 408.50,250.23 409.00,253.39 409.50,256.52 410.00,259.61 410.50,262.68 411.00,265.71 411.50,268.70 412.00,271.66 412.50,274.57 413.00,277.43 413.50,280.25 414.00,283.03 414.50,285.75 415.00,288.42 415.50,291.04 416.00,293.61 416.50,296.12 417.00,298.57 417.50,300.97 418.00,303.31 418.50,305.60 419.00,307.82 419.50,309.99 420.00,312.10 420.50,314.14 421.00,316.13 421.50,318.06 422.00,319.93 422.50,321.74 423.00,323.49 423.50,325.19 424.00,326.82 424.50,328.40 425.00,329.92 425.50,331.38 426.00,332.79 426.50,334.15 427.00,335.45 427.50,336.70 428.00,337.90 428.50,339.05 429.00,340.14 429.50,341.19 430.00,342.20 430.50,343.15 431.00,344.06 431.50,344.93 432.00,345.76 432.50,346.54 433.00,347.29 433.50,348.00 434.00,348.67 434.50,349.30 435.00,349.90 435.50,350.47 436.00,351.00 436.50,351.50 437.00,351.98 437.50,352.42 438.00,352.84 438.50,353.23 439.00,353.60 439.50,353.95 440.00,354.27 440.50,354.57 441.00,354.85 441.50,355.11 442.00,355.36 442.50,355.58 443.00,355.79 443.50,355.98 444.00,356.16 444.50,356.33 445.00,356.48 445.50,356.63 446.00,356.76 446.50,356.87 447.00,356.98 447.50,357.08 448.00,357.18 448.50,357.26 449.00,357.34 449.50,357.41 450.00,357.47 450.50,357.53 451.00,357.58 451.50,357.63 452.00,357.67 452.50,357.71 453.00,357.74 453.50,357.77 454.00,357.80 454.50,357.82 455.00,357.85 455.50,357.87 456.00,357.88 456.50,357.90 457.00,357.91 457.50,357.92 458.00,357.93 458.50,357.94 459.00,357.95 459.50,357.96 460.00,357.96 460.50,357.97 461.00,357.97 461.50,357.98 462.00,357.98 462.50,357.98 463.00,357.99 463.50,357.99 464.00,357.99 464.50,357.99 465.00,357.99 465.50,358.00 466.00,358.00 466.50,358.00 467.00,358.00 467.50,358.00 468.00,358.00 468.50,358.00 469.00,358.00 469.50,358.00 470.00,358.00 470.50,358.00 471.00,358.00 471.50,358.00 472.00,358.00 472.50,358.00 473.00,358.00 473.50,358.00 474.00,358.00 474.50,358.00 475.00,358.00 475.50,358.00 476.00,358.00 476.50,358.00 477.00,358.00 477.50,358.00 478.00,358.00 478.50,358.00 479.00,358.00 479.50,358.00 480.00,358.00 480.50,358.00 481.00,358.00 481.50,358.00 482.00,358.00 482.50,358.00 483.00,358.00 483.50,358.00 484.00,358.00 484.50,358.00 485.00,358.00 485.50,358.00 486.00,358.00 486.50,358.00 487.00,358.00 487.50,358.00 488.00,358.00 488.50,358.00 489.00,358.00 489.50,358.00 490.00,358.00 490.50,358.00 491.00,358.00 491.50,358.00 492.00,358.00 492.50,358.00 493.00,358.00 493.50,358.00 494.00,358.00 494.50,358.00 495.00,358.00 495.50,358.00 496.00,358.00 496.50,358.00 497.00,358.00 497.50,358.00 498.00,358.00 498.50,358.00 499.00,358.00 499.50,358.00 500.00,358.00 500.50,358.00 501.00,358.00 501.50,358.00 502.00,358.00 502.50,358.00 503.00,358.00 503.50,358.00 504.00,358.00 504.50,358.00 505.00,358.00 505.50,358.00 506.00,358.00 506.50,358.00 507.00,358.00 507.50,358.00 508.00,358.00 508.50,358.00 509.00,358.00 509.50,358.00 510.00,358.00 510.50,358.00 511.00,358.00 511.50,358.00 512.00,358.00 512.50,358.00 513.00,357.99 513.50,357.99 514.00,357.99 514.50,357.99 515.00,357.99 515.50,357.98 516.00,357.98 516.50,357.98 517.00,357.97 517.50,357.97 518.00,357.96 518.50,357.96 519.00,357.95 519.50,357.94 520.00,357.93 520.50,357.92 521.00,357.91 521.50,357.90 522.00,357.88 522.50,357.87 523.00,357.85 523.50,357.82 524.00,357.80 524.50,357.77 525.00,357.74 525.50,357.71 526.00,357.67 526.50,357.63 527.00,357.58"/>
<polyline fill="none" stroke="#30a8c8" stroke-width="2.2" shape-rendering="crispEdges" points="8.00,336.11 8.50,337.24 9.00,338.33 9.50,339.37 10.00,340.38 10.50,341.34 11.00,342.27 11.50,343.15 12.00,344.00 12.50,344.81 13.00,345.59 13.50,346.33 14.00,347.03 14.50,347.71 15.00,348.35 15.50,348.96 16.00,349.54 16.50,350.09 17.00,350.61 17.50,351.11 18.00,351.57 18.50,352.02 19.00,352.44 19.50,352.83 20.00,353.20 20.50,353.55 21.00,353.88 21.50,354.19 22.00,354.48 22.50,354.76 23.00,355.01 23.50,355.25 24.00,355.47 24.50,355.68 25.00,355.88 25.50,356.06 26.00,356.22 26.50,356.38 27.00,356.52 27.50,356.66 28.00,356.78 28.50,356.89 29.00,357.00 29.50,357.09 30.00,357.18 30.50,357.26 31.00,357.34 31.50,357.41 32.00,357.47 32.50,357.53 33.00,357.58 33.50,357.62 34.00,357.67 34.50,357.70 35.00,357.74 35.50,357.77 36.00,357.80 36.50,357.82 37.00,357.84 37.50,357.86 38.00,357.88 38.50,357.90 39.00,357.91 39.50,357.92 40.00,357.93 40.50,357.94 41.00,357.95 41.50,357.96 42.00,357.97 42.50,357.97 43.00,357.98 43.50,357.98 44.00,357.98 44.50,357.99 45.00,357.99 45.50,357.99 46.00,357.99 46.50,357.99 47.00,357.99 47.50,358.00 48.00,358.00 48.50,358.00 49.00,358.00 49.50,358.00 50.00,358.00 50.50,358.00 51.00,358.00 51.50,358.00 52.00,358.00 52.50,358.00 53.00,358.00 53.50,358.00 54.00,358.00 54.50,358.00 55.00,358.00 55.50,358.00 56.00,358.00 56.50,358.00 57.00,358.00 57.50,358.00 58.00,358.00 58.50,358.00 59.00,358.00 59.50,358.00 60.00,358.00 60.50,358.00 61.00,358.00 61.50,358.00 62.00,358.00 62.50,358.00 63.00,358.00 63.50,358.00 64.00,358.00 64.50,358.00 65.00,358.00 65.50,358.00 66.00,358.00 66.50,358.00 67.00,358.00 67.50,358.00 68.00,358.00 68.50,358.00 69.00,358.00 69.50,358.00 70.00,358.00 70.50,358.00 71.00,358.00 71.50,358.00 72.00,358.00 72.50,358.00 73.00,358.00 73.50,358.00 74.00,358.00 74.50,358.00 75.00,358.00 75.50,358.00 76.00,358.00 76.50,358.00 77.00,358.00 77.50,358.00 78.00,358.00 78.50,358.00 79.00,358.00 79.50,358.00 80.00,358.00 80.50,358.00 81.00,358.00 81.50,358.00 82.00,358.00 82.50,358.00 83.00,357.99 83.50,357.99 84.00,357.99 84.50,357.99 85.00,357.99 85.50,357.99 86.00,357.98 86.50,357.98 87.00,357.98 87.50,357.97 88.00,357.97 88.50,357.96 89.00,357.95 89.50,357.94 90.00,357.93 90.50,357.92 91.00,357.91 91.50,357.90 92.00,357.88 92.50,357.86 93.00,357.84 93.50,357.82 94.00,357.80 94.50,357.77 95.00,357.74 95.50,357.70 96.00,357.67 96.50,357.62 97.00,357.58 97.50,357.53 98.00,357.47 98.50,357.41 99.00,357.34 99.50,357.26 100.00,357.18 100.50,357.09 101.00,357.00 101.50,356.89 102.00,356.78 102.50,356.66 103.00,356.52 103.50,356.38 104.00,356.22 104.50,356.06 105.00,355.88 105.50,355.68 106.00,355.47 106.50,355.25 107.00,355.01 107.50,354.76 108.00,354.48 108.50,354.19 109.00,353.88 109.50,353.55 110.00,353.20 110.50,352.83 111.00,352.44 111.50,352.02 112.00,351.57 112.50,351.11 113.00,350.61 113.50,350.09 114.00,349.54 114.50,348.96 115.00,348.35 115.50,347.71 116.00,347.03 116.50,346.33 117.00,345.59 117.50,344.81 118.00,344.00 118.50,343.15 119.00,342.27 119.50,341.34 120.00,340.38 120.50,339.37 121.00,338.33 121.50,337.24 122.00,336.11 122.50,334.93 123.00,333.71 123.50,332.45 124.00,331.14 124.50,329.79 125.00,328.39 125.50,326.94 126.00,325.44 126.50,323.90 127.00,322.31 127.50,320.67 128.00,318.98 128.50,317.25 129.00,315.46 129.50,313.63 130.00,311.75 130.50,309.82 131.00,307.84 131.50,305.81 132.00,303.74 132.50,301.61 133.00,299.45 133.50,297.23 134.00,294.97 134.50,292.67 135.00,290.32 135.50,287.93 136.00,285.50 136.50,283.03 137.00,280.51 137.50,277.96 138.00,275.37 138.50,272.75 139.00,270.09 139.50,267.40 140.00,264.68 140.50,261.93 141.00,259.15 141.50,256.35 142.00,253.52 142.50,250.67 143.00,247.80 143.50,244.92 144.00,242.02 144.50,239.10 145.00,236.18 145.50,233.25 146.00,230.31 146.50,227.37 147.00,224.43 147.50,221.49 148.00,218.55 148.50,215.62 149.00,212.71 149.50,209.80 150.00,206.91 150.50,204.04 151.00,201.19 151.50,198.37 152.00,195.57 152.50,192.80 153.00,190.06 153.50,187.36 154.00,184.69 154.50,182.07 155.00,179.49 155.50,176.96 156.00,174.47 156.50,172.04 157.00,169.66 157.50,167.34 158.00,165.08 158.50,162.88 159.00,160.75 159.50,158.68 160.00,156.68 160.50,154.76 161.00,152.90 161.50,151.13 162.00,149.43 162.50,147.81 163.00,146.27 163.50,144.82 164.00,143.45 164.50,142.17 165.00,140.98 165.50,139.88 166.00,138.87 166.50,137.95 167.00,137.13 167.50,136.40 168.00,135.76 168.50,135.23 169.00,134.79 169.50,134.44 170.00,134.20 170.50,134.05 171.00,134.00 171.50,134.05 172.00,134.20 172.50,134.44 173.00,134.79 173.50,135.23 174.00,135.76 174.50,136.40 175.00,137.13 175.50,137.95 176.00,138.87 176.50,139.88 177.00,140.98 177.50,142.17 178.00,143.45 178.50,144.82 179.00,146.27 179.50,147.81 180.00,149.43 180.50,151.13 181.00,152.90 181.50,154.76 182.00,156.68 182.50,158.68 183.00,160.75 183.50,162.88 184.00,165.08 184.50,167.34 185.00,169.66 185.50,172.04 186.00,174.47 186.50,176.96 187.00,179.49 187.50,182.07 188.00,184.69 188.50,187.36 189.00,190.06 189.50,192.80 190.00,195.57 190.50,198.37 191.00,201.19 191.50,204.04 192.00,206.91 192.50,209.80 193.00,212.71 193.50,215.62 194.00,218.55 194.50,221.49 195.00,224.43 195.50,227.37 196.00,230.31 196.50,233.25 197.00,236.18 197.50,239.10 198.00,242.02 198.50,244.92 199.00,247.80 199.50,250.67 200.00,253.52 200.50,256.35 201.00,259.15 201.50,261.93 202.00,264.68 202.50,267.40 203.00,270.09 203.50,272.75 204.00,275.37 204.50,277.96 205.00,280.51 205.50,283.03 206.00,285.50 206.50,287.93 207.00,290.32 207.50,292.67 208.00,294.97 208.50,297.23 209.00,299.45 209.50,301.61 210.00,303.74 210.50,305.81 211.00,307.84 211.50,309.82 212.00,311.75 212.50,313.63 213.00,315.46 213.50,317.25 214.00,318.98 214.50,320.67 215.00,322.31 215.50,323.90 216.00,325.44 216.50,326.94 217.00,328.39 217.50,329.79 218.00,331.14 218.50,332.45 219.00,333.71 219.50,334.93 220.00,336.11 220.50,337.24 221.00,338.33 221.50,339.37 222.00,340.38 222.50,341.34 223.00,342.27 223.50,343.15 224.00,344.00 224.50,344.81 225.00,345.59 225.50,346.33 226.00,347.03 226.50,347.71 227.00,348.35 227.50,348.96 228.00,349.54 228.50,350.09 229.00,350.61 229.50,351.11 230.00,351.57 230.50,352.02 231.00,352.44 231.50,352.83 232.00,353.20 232.50,353.55 233.00,353.88 233.50,354.19 234.00,354.48 234.50,354.76 235.00,355.01 235.50,355.25 236.00,355.47 236.50,355.68 237.00,355.88 237.50,356.06 238.00,356.22 238.50,356.38 239.00,356.52 239.50,356.66 240.00,356.78 240.50,356.89 241.00,357.00 241.50,357.09 242.00,357.18 242.50,357.26 243.00,357.34 243.50,357.41 244.00,357.47 244.50,357.53 245.00,357.58 245.50,357.62 246.00,357.67 246.50,357.70 247.00,357.74 247.50,357.77 248.00,357.80 248.50,357.82 249.00,357.84 249.50,357.86 250.00,357.88 250.50,357.90 251.00,357.91 251.50,357.92 252.00,357.93 252.50,357.94 253.00,357.95 253.50,357.96 254.00,357.97 254.50,357.97 255.00,357.98 255.50,357.98 256.00,357.98 256.50,357.99 257.00,357.99 257.50,357.99 258.00,357.99 258.50,357.99 259.00,357.99 259.50,358.00 260.00,358.00 260.50,358.00 261.00,358.00 261.50,358.00 262.00,358.00 262.50,358.00 263.00,358.00 263.50,358.00 264.00,358.00 264.50,358.00 265.00,358.00 265.50,358.00 266.00,358.00 266.50,358.00 267.00,358.00 267.50,358.00 268.00,358.00 268.50,358.00 269.00,358.00 269.50,358.00 270.00,358.00 270.50,358.00 271.00,358.00 271.50,358.00 272.00,358.00 272.50,358.00 273.00,358.00 273.50,358.00 274.00,358.00 274.50,358.00 275.00,358.00 275.50,358.00 276.00,358.00 276.50,358.00 277.00,358.00 277.50,358.00 278.00,358.00 278.50,358.00 279.00,358.00 279.50,358.00 280.00,358.00 280.50,358.00 281.00,358.00 281.50,358.00 282.00,358.00 282.50,358.00 283.00,358.00 283.50,358.00 284.00,358.00 284.50,358.00 285.00,358.00 285.50,358.00 286.00,358.00 286.50,358.00 287.00,358.00 287.50,358.00 288.00,358.00 288.50,358.00 289.00,358.00 289.50,358.00 290.00,358.00 290.50,358.00 291.00,358.00 291.50,358.00 292.00,358.00 292.50,358.00 293.00,358.00 293.50,358.00 294.00,358.00 294.50,358.00 295.00,357.99 295.50,357.99 296.00,357.99 296.50,357.99 297.00,357.99 297.50,357.99 298.00,357.98 298.50,357.98 299.00,357.98 299.50,357.97 300.00,357.97 300.50,357.96 301.00,357.95 301.50,357.94 302.00,357.93 302.50,357.92 303.00,357.91 303.50,357.90 304.00,357.88 304.50,357.86 305.00,357.84 305.50,357.82 306.00,357.80 306.50,357.77 307.00,357.74 307.50,357.70 308.00,357.67 308.50,357.62 309.00,357.58 309.50,357.53 310.00,357.47 310.50,357.41 311.00,357.34 311.50,357.26 312.00,357.18 312.50,357.09 313.00,357.00 313.50,356.89 314.00,356.78 314.50,356.66 315.00,356.52 315.50,356.38 316.00,356.22 316.50,356.06 317.00,355.88 317.50,355.68 318.00,355.47 318.50,355.25 319.00,355.01 319.50,354.76 320.00,354.48 320.50,354.19 321.00,353.88 321.50,353.55 322.00,353.20 322.50,352.83 323.00,352.44 323.50,352.02 324.00,351.57 324.50,351.11 325.00,350.61 325.50,350.09 326.00,349.54 326.50,348.96 327.00,348.35 327.50,347.71 328.00,347.03 328.50,346.33 329.00,345.59 329.50,344.81 330.00,344.00 330.50,343.15 331.00,342.27 331.50,341.34 332.00,340.38 332.50,339.37 333.00,338.33 333.50,337.24 334.00,336.11 334.50,334.93 335.00,333.71 335.50,332.45 336.00,331.14 336.50,329.79 337.00,328.39 337.50,326.94 338.00,325.44 338.50,323.90 339.00,322.31 339.50,320.67 340.00,318.98 340.50,317.25 341.00,315.46 341.50,313.63 342.00,311.75 342.50,309.82 343.00,307.84 343.50,305.81 344.00,303.74 344.50,301.61 345.00,299.45 345.50,297.23 346.00,294.97 346.50,292.67 347.00,290.32 347.50,287.93 348.00,285.50 348.50,283.03 349.00,280.51 349.50,277.96 350.00,275.37 350.50,272.75 351.00,270.09 351.50,267.40 352.00,264.68 352.50,261.93 353.00,259.15 353.50,256.35 354.00,253.52 354.50,250.67 355.00,247.80 355.50,244.92 356.00,242.02 356.50,239.10 357.00,236.18 357.50,233.25 358.00,230.31 358.50,227.37 359.00,224.43 359.50,221.49 360.00,218.55 360.50,215.62 361.00,212.71 361.50,209.80 362.00,206.91 362.50,204.04 363.00,201.19 363.50,198.37 364.00,195.57 364.50,192.80 365.00,190.06 365.50,187.36 366.00,184.69 366.50,182.07 367.00,179.49 367.50,176.96 368.00,174.47 368.50,172.04 369.00,169.66 369.50,167.34 370.00,165.08 370.50,162.88 371.00,160.75 371.50,158.68 372.00,156.68 372.50,154.76 373.00,152.90 373.50,151.13 374.00,149.43 374.50,147.81 375.00,146.27 375.50,144.82 376.00,143.45 376.50,142.17 377.00,140.98 377.50,139.88 378.00,138.87 378.50,137.95 379.00,137.13 379.50,136.40 380.00,135.76 380.50,135.23 381.00,134.79 381.50,134.44 382.00,134.20 382.50,134.05 383.00,134.00 383.50,134.05 384.00,134.20 384.50,134.44 385.00,134.79 385.50,135.23 386.00,135.76 386.50,136.40 387.00,137.13 387.50,137.95 388.00,138.87 388.50,139.88 389.00,140.98 389.50,142.17 390.00,143.45 390.50,144.82 391.00,146.27 391.50,147.81 392.00,149.43 392.50,151.13 393.00,152.90 393.50,154.76 394.00,156.68 394.50,158.68 395.00,160.75 395.50,162.88 396.00,165.08 396.50,167.34 397.00,169.66 397.50,172.04 398.00,174.47 398.50,176.96 399.00,179.49 399.50,182.07 400.00,184.69 400.50,187.36 401.00,190.06 401.50,192.80 402.00,195.57 402.50,198.37 403.00,201.19 403.50,204.04 404.00,206.91 404.50,209.80 405.00,212.71 405.50,215.62 406.00,218.55 406.50,221.49 407.00,224.43 407.50,227.37 408.00,230.31 408.50,233.25 409.00,236.18 409.50,239.10 410.00,242.02 410.50,244.92 411.00,247.80 411.50,250.67 412.00,253.52 412.50,256.35 413.00,259.15 413.50,261.93 414.00,264.68 414.50,267.40 415.00,270.09 415.50,272.75 416.00,275.37 416.50,277.96 417.00,280.51 417.50,283.03 418.00,285.50 418.50,287.93 419.00,290.32 419.50,292.67 420.00,294.97 420.50,297.23 421.00,299.45 421.50,301.61 422.00,303.74 422.50,305.81 423.00,307.84 423.50,309.82 424.00,311.75 424.50,313.63 425.00,315.46 425.50,317.25 426.00,318.98 426.50,320.67 427.00,322.31 427.50,323.90 428.00,325.44 428.50,326.94 429.00,328.39 429.50,329.79 430.00,331.14 430.50,332.45 431.00,333.71 431.50,334.93 432.00,336.11 432.50,337.24 433.00,338.33 433.50,339.37 434.00,340.38 434.50,341.34 435.00,342.27 435.50,343.15 436.00,344.00 436.50,344.81 437.00,345.59 437.50,346.33 438.00,347.03 438.50,347.71 439.00,348.35 439.50,348.96 440.00,349.54 440.50,350.09 441.00,350.61 441.50,351.11 442.00,351.57 442.50,352.02 443.00,352.44 443.50,352.83 444.00,353.20 444.50,353.55 445.00,353.88 445.50,354.19 446.00,354.48 446.50,354.76 447.00,355.01 447.50,355.25 448.00,355.47 448.50,355.68 449.00,355.88 449.50,356.06 450.00,356.22 450.50,356.38 451.00,356.52 451.50,356.66 452.00,356.78 452.50,356.89 453.00,357.00 453.50,357.09 454.00,357.18 454.50,357.26 455.00,357.34 455.50,357.41 456.00,357.47 456.50,357.53 457.00,357.58 457.50,357.62 458.00,357.67 458.50,357.70 459.00,357.74 459.50,357.77 460.00,357.80 460.50,357.82 461.00,357.84 461.50,357.86 462.00,357.88 462.50,357.90 463.00,357.91 463.50,357.92 464.00,357.93 464.50,357.94 465.00,357.95 465.50,357.96 466.00,357.97 466.50,357.97 467.00,357.98 467.50,357.98 468.00,357.98 468.50,357.99 469.00,357.99 469.50,357.99 470.00,357.99 470.50,357.99 471.00,357.99 471.50,358.00 472.00,358.00 472.50,358.00 473.00,358.00 473.50,358.00 474.00,358.00 474.50,358.00 475.00,358.00 475.50,358.00 476.00,358.00 476.50,358.00 477.00,358.00 477.50,358.00 478.00,358.00 478.50,358.00 479.00,358.00 479.50,358.00 480.00,358.00 480.50,358.00 481.00,358.00 481.50,358.00 482.00,358.00 482.50,358.00 483.00,358.00 483.50,358.00 484.00,358.00 484.50,358.00 485.00,358.00 485.50,358.00 486.00,358.00 486.50,358.00 487.00,358.00 487.50,358.00 488.00,358.00 488.50,358.00 489.00,358.00 489.50,358.00 490.00,358.00 490.50,358.00 491.00,358.00 491.50,358.00 492.00,358.00 492.50,358.00 493.00,358.00 493.50,358.00 494.00,358.00 494.50,358.00 495.00,358.00 495.50,358.00 496.00,358.00 496.50,358.00 497.00,358.00 497.50,358.00 498.00,358.00 498.50,358.00 499.00,358.00 499.50,358.00 500.00,358.00 500.50,358.00 501.00,358.00 501.50,358.00 502.00,358.00 502.50,358.00 503.00,358.00 503.50,358.00 504.00,358.00 504.50,358.00 505.00,358.00 505.50,358.00 506.00,358.00 506.50,358.00 507.00,357.99 507.50,357.99 508.00,357.99 508.50,357.99 509.00,357.99 509.50,357.99 510.00,357.98 510.50,357.98 511.00,357.98 511.50,357.97 512.00,357.97 512.50,357.96 513.00,357.95 513.50,357.94 514.00,357.93 514.50,357.92 515.00,357.91 515.50,357.90 516.00,357.88 516.50,357.86 517.00,357.84 517.50,357.82 518.00,357.80 518.50,357.77 519.00,357.74 519.50,357.70 520.00,357.67 520.50,357.62 521.00,357.58 521.50,357.53 522.00,357.47 522.50,357.41 523.00,357.34 523.50,357.26 524.00,357.18 524.50,357.09 525.00,357.00 525.50,356.89 526.00,356.78 526.50,356.66 527.00,356.52"/>
<polyline fill="none" stroke="#000000" stroke-width="2.2" shape-rendering="crispEdges" points="8.00,318.84 8.50,320.37 9.00,321.86 9.50,323.31 10.00,324.72 10.50,326.10 11.00,327.44 11.50,328.74 12.00,330.00 12.50,331.23 13.00,332.42 13.50,333.57 14.00,334.69 14.50,335.77 15.00,336.82 15.50,337.83 16.00,338.81 16.50,339.75 17.00,340.66 17.50,341.54 18.00,342.39 18.50,343.20 19.00,343.98 19.50,344.74 20.00,345.46 20.50,346.15 21.00,346.82 21.50,347.46 22.00,348.07 22.50,348.65 23.00,349.21 23.50,349.74 24.00,350.25 24.50,350.73 25.00,351.19 25.50,351.63 26.00,352.05 26.50,352.44 27.00,352.82 27.50,353.17 28.00,353.51 28.50,353.83 29.00,354.13 29.50,354.41 30.00,354.68 30.50,354.93 31.00,355.16 31.50,355.38 32.00,355.59 32.50,355.79 33.00,355.97 33.50,356.14 34.00,356.30 34.50,356.45 35.00,356.58 35.50,356.71 36.00,356.83 36.50,356.94 37.00,357.04 37.50,357.13 38.00,357.22 38.50,357.30 39.00,357.37 39.50,357.43 40.00,357.50 40.50,357.55 41.00,357.60 41.50,357.65 42.00,357.69 42.50,357.72 43.00,357.76 43.50,357.79 44.00,357.82 44.50,357.84 45.00,357.86 45.50,357.88 46.00,357.90 46.50,357.91 47.00,357.92 47.50,357.94 48.00,357.95 48.50,357.95 49.00,357.96 49.50,357.97 50.00,357.97 50.50,357.98 51.00,357.98 51.50,357.99 52.00,357.99 52.50,357.99 53.00,357.99 53.50,357.99 54.00,358.00 54.50,358.00 55.00,358.00 55.50,358.00 56.00,358.00 56.50,358.00 57.00,358.00 57.50,358.00 58.00,358.00 58.50,358.00 59.00,358.00 59.50,358.00 60.00,358.00 60.50,358.00 61.00,358.00 61.50,358.00 62.00,358.00 62.50,358.00 63.00,358.00 63.50,358.00 64.00,358.00 64.50,358.00 65.00,358.00 65.50,358.00 66.00,358.00 66.50,358.00 67.00,358.00 67.50,358.00 68.00,358.00 68.50,358.00 69.00,358.00 69.50,358.00 70.00,358.00 70.50,358.00 71.00,358.00 71.50,358.00 72.00,358.00 72.50,358.00 73.00,358.00 73.50,358.00 74.00,358.00 74.50,358.00 75.00,358.00 75.50,358.00 76.00,358.00 76.50,357.99 77.00,357.99 77.50,357.99 78.00,357.99 78.50,357.99 79.00,357.98 79.50,357.98 80.00,357.97 80.50,357.97 81.00,357.96 81.50,357.95 82.00,357.95 82.50,357.94 83.00,357.92 83.50,357.91 84.00,357.90 84.50,357.88 85.00,357.86 85.50,357.84 86.00,357.82 86.50,357.79 87.00,357.76 87.50,357.72 88.00,357.69 88.50,357.65 89.00,357.60 89.50,357.55 90.00,357.50 90.50,357.43 91.00,357.37 91.50,357.30 92.00,357.22 92.50,357.13 93.00,357.04 93.50,356.94 94.00,356.83 94.50,356.71 95.00,356.58 95.50,356.45 96.00,356.30 96.50,356.14 97.00,355.97 97.50,355.79 98.00,355.59 98.50,355.38 99.00,355.16 99.50,354.93 100.00,354.68 100.50,354.41 101.00,354.13 101.50,353.83 102.00,353.51 102.50,353.17 103.00,352.82 103.50,352.44 104.00,352.05 104.50,351.63 105.00,351.19 105.50,350.73 106.00,350.25 106.50,349.74 107.00,349.21 107.50,348.65 108.00,348.07 108.50,347.46 109.00,346.82 109.50,346.15 110.00,345.46 110.50,344.74 111.00,343.98 111.50,343.20 112.00,342.39 112.50,341.54 113.00,340.66 113.50,339.75 114.00,338.81 114.50,337.83 115.00,336.82 115.50,335.77 116.00,334.69 116.50,333.57 117.00,332.42 117.50,331.23 118.00,330.00 118.50,328.74 119.00,327.44 119.50,326.10 120.00,324.72 120.50,323.31 121.00,321.86 121.50,320.37 122.00,318.84 122.50,317.28 123.00,315.68 123.50,314.04 124.00,312.36 124.50,310.64 125.00,308.89 125.50,307.10 126.00,305.27 126.50,303.41 127.00,301.51 127.50,299.57 128.00,297.60 128.50,295.60 129.00,293.56 129.50,291.49 130.00,289.38 130.50,287.25 131.00,285.08 131.50,282.88 132.00,280.65 132.50,278.40 133.00,276.11 133.50,273.80 134.00,271.46 134.50,269.10 135.00,266.72 135.50,264.31 136.00,261.88 136.50,259.43 137.00,256.96 137.50,254.48 138.00,251.98 138.50,249.46 139.00,246.93 139.50,244.39 140.00,241.84 140.50,239.28 141.00,236.72 141.50,234.15 142.00,231.57 142.50,229.00 143.00,226.42 143.50,223.84 144.00,221.27 144.50,218.70 145.00,216.14 145.50,213.59 146.00,211.05 146.50,208.51 147.00,206.00 147.50,203.49 148.00,201.01 148.50,198.54 149.00,196.10 149.50,193.68 150.00,191.28 150.50,188.91 151.00,186.57 151.50,184.26 152.00,181.98 152.50,179.73 153.00,177.52 153.50,175.35 154.00,173.21 154.50,171.12 155.00,169.07 155.50,167.06 156.00,165.10 156.50,163.18 157.00,161.32 157.50,159.50 158.00,157.74 158.50,156.03 159.00,154.38 159.50,152.78 160.00,151.24 160.50,149.75 161.00,148.33 161.50,146.97 162.00,145.67 162.50,144.44 163.00,143.27 163.50,142.17 164.00,141.13 164.50,140.16 165.00,139.26 165.50,138.42 166.00,137.66 166.50,136.97 167.00,136.35 167.50,135.80 168.00,135.32 168.50,134.92 169.00,134.59 169.50,134.33 170.00,134.15 170.50,134.04 171.00,134.00 171.50,134.04 172.00,134.15 172.50,134.33 173.00,134.59 173.50,134.92 174.00,135.32 174.50,135.80 175.00,136.35 175.50,136.97 176.00,137.66 176.50,138.42 177.00,139.26 177.50,140.16 178.00,141.13 178.50,142.17 179.00,143.27 179.50,144.44 180.00,145.67 180.50,146.97 181.00,148.33 181.50,149.75 182.00,151.24 182.50,152.78 183.00,154.38 183.50,156.03 184.00,157.74 184.50,159.50 185.00,161.32 185.50,163.18 186.00,165.10 186.50,167.06 187.00,169.07 187.50,171.12 188.00,173.21 188.50,175.35 189.00,177.52 189.50,179.73 190.00,181.98 190.50,184.26 191.00,186.57 191.50,188.91 192.00,191.28 192.50,193.68 193.00,196.10 193.50,198.54 194.00,201.01 194.50,203.49 195.00,206.00 195.50,208.51 196.00,211.05 196.50,213.59 197.00,216.14 197.50,218.70 198.00,221.27 198.50,223.84 199.00,226.42 199.50,229.00 200.00,231.57 200.50,234.15 201.00,236.72 201.50,239.28 202.00,241.84 202.50,244.39 203.00,246.93 203.50,249.46 204.00,251.98 204.50,254.48 205.00,256.96 205.50,259.43 206.00,261.88 206.50,264.31 207.00,266.72 207.50,269.10 208.00,271.46 208.50,273.80 209.00,276.11 209.50,278.40 210.00,280.65 210.50,282.88 211.00,285.08 211.50,287.25 212.00,289.38 212.50,291.49 213.00,293.56 213.50,295.60 214.00,297.60 214.50,299.57 215.00,301.51 215.50,303.41 216.00,305.27 216.50,307.10 217.00,308.89 217.50,310.64 218.00,312.36 218.50,314.04 219.00,315.68 219.50,317.28 220.00,318.84 220.50,320.37 221.00,321.86 221.50,323.31 222.00,324.72 222.50,326.10 223.00,327.44 223.50,328.74 224.00,330.00 224.50,331.23 225.00,332.42 225.50,333.57 226.00,334.69 226.50,335.77 227.00,336.82 227.50,337.83 228.00,338.81 228.50,339.75 229.00,340.66 229.50,341.54 230.00,342.39 230.50,343.20 231.00,343.98 231.50,344.74 232.00,345.46 232.50,346.15 233.00,346.82 233.50,347.46 234.00,348.07 234.50,348.65 235.00,349.21 235.50,349.74 236.00,350.25 236.50,350.73 237.00,351.19 237.50,351.63 238.00,352.05 238.50,352.44 239.00,352.82 239.50,353.17 240.00,353.51 240.50,353.83 241.00,354.13 241.50,354.41 242.00,354.68 242.50,354.93 243.00,355.16 243.50,355.38 244.00,355.59 244.50,355.79 245.00,355.97 245.50,356.14 246.00,356.30 246.50,356.45 247.00,356.58 247.50,356.71 248.00,356.83 248.50,356.94 249.00,357.04 249.50,357.13 250.00,357.22 250.50,357.30 251.00,357.37 251.50,357.43 252.00,357.50 252.50,357.55 253.00,357.60 253.50,357.65 254.00,357.69 254.50,357.72 255.00,357.76 255.50,357.79 256.00,357.82 256.50,357.84 257.00,357.86 257.50,357.88 258.00,357.90 258.50,357.91 259.00,357.92 259.50,357.94 260.00,357.95 260.50,357.95 261.00,357.96 261.50,357.97 262.00,357.97 262.50,357.98 263.00,357.98 263.50,357.99 264.00,357.99 264.50,357.99 265.00,357.99 265.50,357.99 266.00,358.00 266.50,358.00 267.00,358.00 267.50,358.00 268.00,358.00 268.50,358.00 269.00,358.00 269.50,358.00 270.00,358.00 270.50,358.00 271.00,358.00 271.50,358.00 272.00,358.00 272.50,358.00 273.00,358.00 273.50,358.00 274.00,358.00 274.50,358.00 275.00,358.00 275.50,358.00 276.00,358.00 276.50,358.00 277.00,358.00 277.50,358.00 278.00,358.00 278.50,358.00 279.00,358.00 279.50,358.00 280.00,358.00 280.50,358.00 281.00,358.00 281.50,358.00 282.00,358.00 282.50,358.00 283.00,358.00 283.50,358.00 284.00,358.00 284.50,358.00 285.00,358.00 285.50,358.00 286.00,358.00 286.50,358.00 287.00,358.00 287.50,358.00 288.00,358.00 288.50,357.99 289.00,357.99 289.50,357.99 290.00,357.99 290.50,357.99 291.00,357.98 291.50,357.98 292.00,357.97 292.50,357.97 293.00,357.96 293.50,357.95 294.00,357.95 294.50,357.94 295.00,357.92 295.50,357.91 296.00,357.90 296.50,357.88 297.00,357.86 297.50,357.84 298.00,357.82 298.50,357.79 299.00,357.76 299.50,357.72 300.00,357.69 300.50,357.65 301.00,357.60 301.50,357.55 302.00,357.50 302.50,357.43 303.00,357.37 303.50,357.30 304.00,357.22 304.50,357.13 305.00,357.04 305.50,356.94 306.00,356.83 306.50,356.71 307.00,356.58 307.50,356.45 308.00,356.30 308.50,356.14 309.00,355.97 309.50,355.79 310.00,355.59 310.50,355.38 311.00,355.16 311.50,354.93 312.00,354.68 312.50,354.41 313.00,354.13 313.50,353.83 314.00,353.51 314.50,353.17 315.00,352.82 315.50,352.44 316.00,352.05 316.50,351.63 317.00,351.19 317.50,350.73 318.00,350.25 318.50,349.74 319.00,349.21 319.50,348.65 320.00,348.07 320.50,347.46 321.00,346.82 321.50,346.15 322.00,345.46 322.50,344.74 323.00,343.98 323.50,343.20 324.00,342.39 324.50,341.54 325.00,340.66 325.50,339.75 326.00,338.81 326.50,337.83 327.00,336.82 327.50,335.77 328.00,334.69 328.50,333.57 329.00,332.42 329.50,331.23 330.00,330.00 330.50,328.74 331.00,327.44 331.50,326.10 332.00,324.72 332.50,323.31 333.00,321.86 333.50,320.37 334.00,318.84 334.50,317.28 335.00,315.68 335.50,314.04 336.00,312.36 336.50,310.64 337.00,308.89 337.50,307.10 338.00,305.27 338.50,303.41 339.00,301.51 339.50,299.57 340.00,297.60 340.50,295.60 341.00,293.56 341.50,291.49 342.00,289.38 342.50,287.25 343.00,285.08 343.50,282.88 344.00,280.65 344.50,278.40 345.00,276.11 345.50,273.80 346.00,271.46 346.50,269.10 347.00,266.72 347.50,264.31 348.00,261.88 348.50,259.43 349.00,256.96 349.50,254.48 350.00,251.98 350.50,249.46 351.00,246.93 351.50,244.39 352.00,241.84 352.50,239.28 353.00,236.72 353.50,234.15 354.00,231.57 354.50,229.00 355.00,226.42 355.50,223.84 356.00,221.27 356.50,218.70 357.00,216.14 357.50,213.59 358.00,211.05 358.50,208.51 359.00,206.00 359.50,203.49 360.00,201.01 360.50,198.54 361.00,196.10 361.50,193.68 362.00,191.28 362.50,188.91 363.00,186.57 363.50,184.26 364.00,181.98 364.50,179.73 365.00,177.52 365.50,175.35 366.00,173.21 366.50,171.12 367.00,169.07 367.50,167.06 368.00,165.10 368.50,163.18 369.00,161.32 369.50,159.50 370.00,157.74 370.50,156.03 371.00,154.38 371.50,152.78 372.00,151.24 372.50,149.75 373.00,148.33 373.50,146.97 374.00,145.67 374.50,144.44 375.00,143.27 375.50,142.17 376.00,141.13 376.50,140.16 377.00,139.26 377.50,138.42 378.00,137.66 378.50,136.97 379.00,136.35 379.50,135.80 380.00,135.32 380.50,134.92 381.00,134.59 381.50,134.33 382.00,134.15 382.50,134.04 383.00,134.00 383.50,134.04 384.00,134.15 384.50,134.33 385.00,134.59 385.50,134.92 386.00,135.32 386.50,135.80 387.00,136.35 387.50,136.97 388.00,137.66 388.50,138.42 389.00,139.26 389.50,140.16 390.00,141.13 390.50,142.17 391.00,143.27 391.50,144.44 392.00,145.67 392.50,146.97 393.00,148.33 393.50,149.75 394.00,151.24 394.50,152.78 395.00,154.38 395.50,156.03 396.00,157.74 396.50,159.50 397.00,161.32 397.50,163.18 398.00,165.10 398.50,167.06 399.00,169.07 399.50,171.12 400.00,173.21 400.50,175.35 401.00,177.52 401.50,179.73 402.00,181.98 402.50,184.26 403.00,186.57 403.50,188.91 404.00,191.28 404.50,193.68 405.00,196.10 405.50,198.54 406.00,201.01 406.50,203.49 407.00,206.00 407.50,208.51 408.00,211.05 408.50,213.59 409.00,216.14 409.50,218.70 410.00,221.27 410.50,223.84 411.00,226.42 411.50,229.00 412.00,231.57 412.50,234.15 413.00,236.72 413.50,239.28 414.00,241.84 414.50,244.39 415.00,246.93 415.50,249.46 416.00,251.98 416.50,254.48 417.00,256.96 417.50,259.43 418.00,261.88 418.50,264.31 419.00,266.72 419.50,269.10 420.00,271.46 420.50,273.80 421.00,276.11 421.50,278.40 422.00,280.65 422.50,282.88 423.00,285.08 423.50,287.25 424.00,289.38 424.50,291.49 425.00,293.56 425.50,295.60 426.00,297.60 426.50,299.57 427.00,301.51 427.50,303.41 428.00,305.27 428.50,307.10 429.00,308.89 429.50,310.64 430.00,312.36 430.50,314.04 431.00,315.68 431.50,317.28 432.00,318.84 432.50,320.37 433.00,321.86 433.50,323.31 434.00,324.72 434.50,326.10 435.00,327.44 435.50,328.74 436.00,330.00 436.50,331.23 437.00,332.42 437.50,333.57 438.00,334.69 438.50,335.77 439.00,336.82 439.50,337.83 440.00,338.81 440.50,339.75 441.00,340.66 441.50,341.54 442.00,342.39 442.50,343.20 443.00,343.98 443.50,344.74 444.00,345.46 444.50,346.15 445.00,346.82 445.50,347.46 446.00,348.07 446.50,348.65 447.00,349.21 447.50,349.74 448.00,350.25 448.50,350.73 449.00,351.19 449.50,351.63 450.00,352.05 450.50,352.44 451.00,352.82 451.50,353.17 452.00,353.51 452.50,353.83 453.00,354.13 453.50,354.41 454.00,354.68 454.50,354.93 455.00,355.16 455.50,355.38 456.00,355.59 456.50,355.79 457.00,355.97 457.50,356.14 458.00,356.30 458.50,356.45 459.00,356.58 459.50,356.71 460.00,356.83 460.50,356.94 461.00,357.04 461.50,357.13 462.00,357.22 462.50,357.30 463.00,357.37 463.50,357.43 464.00,357.50 464.50,357.55 465.00,357.60 465.50,357.65 466.00,357.69 466.50,357.72 467.00,357.76 467.50,357.79 468.00,357.82 468.50,357.84 469.00,357.86 469.50,357.88 470.00,357.90 470.50,357.91 471.00,357.92 471.50,357.94 472.00,357.95 472.50,357.95 473.00,357.96 473.50,357.97 474.00,357.97 474.50,357.98 475.00,357.98 475.50,357.99 476.00,357.99 476.50,357.99 477.00,357.99 477.50,357.99 478.00,358.00 478.50,358.00 479.00,358.00 479.50,358.00 480.00,358.00 480.50,358.00 481.00,358.00 481.50,358.00 482.00,358.00 482.50,358.00 483.00,358.00 483.50,358.00 484.00,358.00 484.50,358.00 485.00,358.00 485.50,358.00 486.00,358.00 486.50,358.00 487.00,358.00 487.50,358.00 488.00,358.00 488.50,358.00 489.00,358.00 489.50,358.00 490.00,358.00 490.50,358.00 491.00,358.00 491.50,358.00 492.00,358.00 492.50,358.00 493.00,358.00 493.50,358.00 494.00,358.00 494.50,358.00 495.00,358.00 495.50,358.00 496.00,358.00 496.50,358.00 497.00,358.00 497.50,358.00 498.00,358.00 498.50,358.00 499.00,358.00 499.50,358.00 500.00,358.00 500.50,357.99 501.00,357.99 501.50,357.99 502.00,357.99 502.50,357.99 503.00,357.98 503.50,357.98 504.00,357.97 504.50,357.97 505.00,357.96 505.50,357.95 506.00,357.95 506.50,357.94 507.00,357.92 507.50,357.91 508.00,357.90 508.50,357.88 509.00,357.86 509.50,357.84 510.00,357.82 510.50,357.79 511.00,357.76 511.50,357.72 512.00,357.69 512.50,357.65 513.00,357.60 513.50,357.55 514.00,357.50 514.50,357.43 515.00,357.37 515.50,357.30 516.00,357.22 516.50,357.13 517.00,357.04 517.50,356.94 518.00,356.83 518.50,356.71 519.00,356.58 519.50,356.45 520.00,356.30 520.50,356.14 521.00,355.97 521.50,355.79 522.00,355.59 522.50,355.38 523.00,355.16 523.50,354.93 524.00,354.68 524.50,354.41 525.00,354.13 525.50,353.83 526.00,353.51 526.50,353.17 527.00,352.82"/>
    <path d="M277.5 89 L272 103 L283 103 Z" fill="#000"/>
    </g>
  </svg>
  <svg class="a" style="left:0;top:0" width="540" height="600"><defs><clipPath id="lc"><rect x="8" y="89" width="520" height="487"/></clipPath></defs><g clip-path="url(#lc)" font-family="Liberation Serif" fill="#000"><text x="273.5" y="151.0" text-anchor="end" font-size="16" >1</text><text x="273.5" y="196.0" text-anchor="end" font-size="16" >0.8</text><text x="273.5" y="241.0" text-anchor="end" font-size="16" >0.6</text><text x="273.5" y="285.0" text-anchor="end" font-size="16" >0.4</text><text x="273.5" y="330.0" text-anchor="end" font-size="16" >0.2</text><text x="273.5" y="420.0" text-anchor="end" font-size="16" >−0.2</text><text x="273.5" y="465.0" text-anchor="end" font-size="16" >−0.4</text><text x="273.5" y="509.0" text-anchor="end" font-size="16" >−0.6</text><text x="273.5" y="554.0" text-anchor="end" font-size="16" >−0.8</text><text x="262.5" y="104.5" font-size="16" font-style="italic" font-weight="bold">y</text><circle cx="269" cy="367.3" r="4.5" fill="none" stroke="#000" stroke-width="1.1"/><text x="61.5" y="375.0" text-anchor="end" font-size="16"  textLength="10.5" lengthAdjust="spacingAndGlyphs">π</text><rect x="43" y="370" width="8" height="1"/><text x="116.5" y="379.0" text-anchor="end" font-size="16"  textLength="10.5" lengthAdjust="spacingAndGlyphs">π</text><text x="101.5" y="371.0" text-anchor="middle" font-size="16" >3</text><rect x="96.5" y="373" width="10" height="1"/><text x="101.5" y="387.0" text-anchor="middle" font-size="16" >4</text><rect x="86.5" y="374" width="8" height="1"/><text x="163.5" y="371.0" text-anchor="middle" font-size="16"  textLength="10.5" lengthAdjust="spacingAndGlyphs">π</text><rect x="158.5" y="373" width="10" height="1"/><text x="163.5" y="387.0" text-anchor="middle" font-size="16" >2</text><rect x="148.5" y="374" width="8" height="1"/><text x="216.5" y="371.0" text-anchor="middle" font-size="16"  textLength="10.5" lengthAdjust="spacingAndGlyphs">π</text><rect x="211.5" y="373" width="10" height="1"/><text x="216.5" y="387.0" text-anchor="middle" font-size="16" >4</text><rect x="201.5" y="374" width="8" height="1"/><text x="322.5" y="371.0" text-anchor="middle" font-size="16"  textLength="10.5" lengthAdjust="spacingAndGlyphs">π</text><rect x="317.5" y="373" width="10" height="1"/><text x="322.5" y="387.0" text-anchor="middle" font-size="16" >4</text><text x="375.5" y="371.0" text-anchor="middle" font-size="16"  textLength="10.5" lengthAdjust="spacingAndGlyphs">π</text><rect x="370.5" y="373" width="10" height="1"/><text x="375.5" y="387.0" text-anchor="middle" font-size="16" >2</text><text x="434.5" y="379.0" text-anchor="end" font-size="16"  textLength="10.5" lengthAdjust="spacingAndGlyphs">π</text><text x="419.5" y="371.0" text-anchor="middle" font-size="16" >3</text><rect x="414.5" y="373" width="10" height="1"/><text x="419.5" y="387.0" text-anchor="middle" font-size="16" >4</text><text x="485.5" y="375.0" text-anchor="end" font-size="16"  textLength="10.5" lengthAdjust="spacingAndGlyphs">π</text><rect x="8" y="371" width="2" height="1"/><path d="M8 378.7 L9.8 377.2" stroke="#000" stroke-width="1.2"/></g></svg>
  <!-- status -->
  <div class="a" style="left:4px;top:576px;width:536px;height:19px;background:#c0c0c0"></div><div class="a" style="left:4px;top:576px;width:536px;height:2px;background:#bcbcb8"></div>
  <div class="a" style="left:4px;top:595px;width:536px;height:1px;background:#f0f4fc"></div>
  <div class="a" style="left:253px;top:577px;width:1px;height:17px;background:#fff"></div>
  <div class="a jp" style="left:10px;top:580px;font-size:11px;color:#000;white-space:pre;letter-spacing:-0.2px">( 3.26, 1.160)</div>
  <div class="a jp" style="left:257px;top:580px;font-size:11px;color:#000;white-space:pre">-3.99</div><svg class="a" style="left:287px;top:583px" width="8" height="9"><path d="M6.5 0.5 L1 4.3 L6.5 8" fill="none" stroke="#000" stroke-width="1.1"/></svg><div class="a jp" style="left:298px;top:580px;font-size:11px;color:#000;white-space:pre">x</div><svg class="a" style="left:307px;top:583px" width="8" height="9"><path d="M6.5 0.5 L1 4.3 L6.5 8" fill="none" stroke="#000" stroke-width="1.1"/></svg><div class="a jp" style="left:322px;top:580px;font-size:11px;color:#000;white-space:pre">3.99</div><div class="a jp" style="left:345px;top:580px;font-size:11px;color:#000;white-space:pre">,</div><div class="a jp" style="left:352px;top:580px;font-size:11px;color:#000;white-space:pre">-1.200</div><svg class="a" style="left:387px;top:583px" width="8" height="9"><path d="M6.5 0.5 L1 4.3 L6.5 8" fill="none" stroke="#000" stroke-width="1.1"/></svg><div class="a jp" style="left:398px;top:580px;font-size:11px;color:#000;white-space:pre">y</div><svg class="a" style="left:407px;top:583px" width="8" height="9"><path d="M6.5 0.5 L1 4.3 L6.5 8" fill="none" stroke="#000" stroke-width="1.1"/></svg><div class="a jp" style="left:422px;top:580px;font-size:11px;color:#000;white-space:pre">1.200</div>
  <!-- min/max buttons -->
  <div class="a" style="left:481px;top:6px;width:21px;height:21px;border:1px solid #fff;border-radius:3px;background:linear-gradient(135deg,#5a8cff,#2260ee 60%,#1850e0)"></div>
  <div class="a" style="left:486px;top:19px;width:7px;height:3px;background:#fff"></div>
  <div class="a" style="left:504px;top:6px;width:21px;height:21px;border:1px solid #fff;border-radius:3px;background:linear-gradient(135deg,#5a8cff,#2260ee 60%,#1850e0)"></div>
  <div class="a" style="left:509px;top:11px;width:11px;height:11px;border:1px solid #fff;border-top-width:3px"></div>
</div>
<div class="a" style="left:526px;top:0;width:274px;height:600px;overflow:hidden;border-radius:8px 8px 0 0"><div class="a" style="left:0;top:0;width:274px;height:600px;background:#7b8fe3;border-radius:8px 8px 0 0"></div><div class="a" style="left:0;top:0;width:274px;height:30px;border-radius:8px 8px 0 0;background:linear-gradient(#6c84d4 0,#6c84d4 1px,#9cb6f6 1px,#9cb6f6 3px,#7e9ce4 5px,#7894de 9px,#7893de 16px,#7a9ee8 21px,#7ca2ea 26px,#7088dc 27.5px,#6c78d4 30px)"></div><div class="a" style="left:0;top:0;width:4px;height:600px;background:linear-gradient(90deg,#6c7cd8,#8296e6)"></div><div class="a" style="left:270px;top:0;width:4px;height:600px;background:linear-gradient(90deg,#8296e6,#6c7cd8)"></div><svg class="a" style="left:7px;top:9px" width="16" height="15" viewBox="0 0 16 15"><path d="M3 3 L8 1.5 L12 3 L14 6 L13 10 L9 14 L4 14 L1 10 L1 6 Z" fill="#741890" stroke="#180838" stroke-width="1.2"/><path d="M11 3 L14 0.5" stroke="#102838" stroke-width="1.3"/><circle cx="5" cy="6" r="0.9" fill="#c050d8"/><circle cx="9" cy="5" r="0.9" fill="#c050d8"/><circle cx="7" cy="9" r="0.9" fill="#c050d8"/><circle cx="4" cy="10" r="0.9" fill="#b040c8"/><circle cx="10" cy="9" r="0.9" fill="#b040c8"/><circle cx="11.5" cy="6.5" r="0.8" fill="#b040c8"/></svg><div class="a" style="left:26px;top:8px;font-size:12px;color:#dce4fa;-webkit-text-stroke:0.5px #dce4fa;transform:scaleX(0.94);transform-origin:0 0">データパネル</div><div class="a" style="left:247px;top:6px;width:21px;height:21px;border:1px solid #e0e4f8;border-radius:3px;background:linear-gradient(135deg,#d08890,#b86870 60%,#a85860)"></div><svg class="a" style="left:247px;top:6px" width="21" height="21"><path d="M6 6 L15 15 M15 6 L6 15" stroke="#fff" stroke-width="2"/></svg><div class="a" style="left:4px;top:30px;width:229px;height:20px;background:#fff"></div><div class="a" style="left:233px;top:30px;width:37px;height:20px;background:#ece9d8"></div><div class="a" style="left:4px;top:50px;width:266px;height:1px;background:#a8a8a8"></div><div class="a" style="left:4px;top:51px;width:266px;height:1px;background:#fff"></div><div class="a" style="left:10px;top:31px;font-size:12px;color:#989898;white-space:pre;transform:scaleX(0.75);transform-origin:0 0">ファイル(<u>F</u>)</div><div class="a" style="left:73px;top:31px;font-size:12px;color:#989898;white-space:pre;transform:scaleX(0.925);transform-origin:0 0">編集(<u>E</u>)</div><div class="a" style="left:125px;top:31px;font-size:12px;color:#989898;white-space:pre;transform:scaleX(1.0);transform-origin:0 0">表示(<u>V</u>)</div><div class="a" style="left:179px;top:31px;font-size:12px;color:#989898;white-space:pre;transform:scaleX(0.835);transform-origin:0 0">ヘルプ(<u>H</u>)</div><div class="a" style="left:4px;top:52px;width:266px;height:35px;background:#c0c0c0"></div><div class="a" style="left:4px;top:87px;width:266px;height:1px;background:#a4a498"></div><div class="a" style="left:4px;top:88px;width:266px;height:1px;background:#fafafa"></div><div class="a" style="left:5px;top:89px;width:248px;height:1px;background:#c8c8c0"></div><div class="a" style="left:5px;top:90px;width:248px;height:1px;background:#fff"></div><div class="a" style="left:5px;top:90px;width:1px;height:486px;background:#fff"></div><div class="a" style="left:95px;top:56px;width:1px;height:27px;background:#fff"></div><div class="a" style="left:157px;top:56px;width:1px;height:27px;background:#fff"></div><svg class="a" style="left:0;top:51px" width="274" height="37"><circle cx="19.5" cy="20" r="5.3" fill="#7c7c7c" stroke="#000" stroke-width="1.2"/><path d="M22 15 Q24 11 27 13" stroke="#000" fill="none" stroke-width="1.2"/><circle cx="18" cy="18.5" r="1.5" fill="#b0b0b0"/><path d="M41 14 h5 l1 1 h5 v9 h-11 Z" fill="#f8f8a0" stroke="#000" stroke-width="1"/><path d="M41 24 l4 -7 h12 l-4 7 Z" fill="#9c9040" stroke="#000" stroke-width="1"/><path d="M49 11 Q53 8 56 12" stroke="#000" fill="none" stroke-width="1.2"/><path d="M57 12 l-3 0 l2 3 Z" fill="#000"/><rect x="70.5" y="11.5" width="14" height="14" fill="#4c4c4c" stroke="#000" stroke-width="1.2"/><rect x="72.5" y="12.5" width="10" height="6" fill="#c0c0c0"/><rect x="74" y="21" width="7" height="4" fill="#202020"/><rect x="79" y="22" width="2" height="2" fill="#d0d0d0"/><path d="M107 19 C110 13 119 13 118 19 C117.5 22 116 22 115 22" stroke="#000" stroke-width="1.5" fill="none"/><path d="M103 22 L104 15 L110 20 Z" fill="#000"/><path d="M147 19 C144 13 136 13 135 18 C135 21 137 22 139 22" stroke="#fff" stroke-width="1.5" fill="none"/><path d="M149 15 V22 H143" stroke="#fff" stroke-width="1.2" fill="none"/><path d="M146 18 C143 14 137 14 136 18" stroke="#a0a0a0" stroke-width="1" fill="none"/><path d="M168 12 h10 l-2 6 h-10 Z" fill="#fff" stroke="#000" stroke-width="1.2"/><rect x="164.5" y="17.5" width="17" height="7" fill="#fff" stroke="#000" stroke-width="1.5"/><path d="M166 21 h14" stroke="#000"/><rect x="193.5" y="13.5" width="17" height="11" rx="2" fill="#b8b8b0" stroke="#000" stroke-width="1.5"/><circle cx="200" cy="19" r="3" fill="#e8e8e8" stroke="#000" stroke-width="1.2"/><rect x="207" y="15" width="2" height="2" fill="#f0f0a0"/><path d="M220 17 h5 l-2.5 3 Z" fill="#000"/></svg><div class="a" style="left:4px;top:89px;width:1px;height:487px;background:#fff"></div><div class="a" style="left:6px;top:91px;width:247px;height:273px;background:#c8c8ec"></div><svg class="a" style="left:87px;top:88px" width="24" height="24"><path d="M1 16 Q3 9 5.5 9 Q8 9 10.5 12.4 Q13 15.5 15 15.5 Q17.5 15.5 20 9.5" fill="none" stroke="#10108c" stroke-width="1.2"/><path d="M10.6 3 V22 M1 12.4 H20" stroke="#000" stroke-width="1.2"/></svg><div class="a" style="left:112px;top:92px;font-size:14px;color:#000">陽関数</div><div class="a" style="left:48px;top:111px;width:205px;height:228px;background:#fff;border-top:1px solid #a0a0a0;border-left:1px solid #a0a0a0"></div><div class="a serif" style="left:15px;top:122px;font-size:17px;font-weight:bold;font-style:italic;color:#1c1ca0;-webkit-text-stroke:0.3px #1c1ca0;line-height:20px">y1=</div><div class="a serif" style="left:52px;top:121px;font-size:18px;color:#000;line-height:20px;white-space:pre">sin<b><i>x</i></b></div><div class="a" style="left:49px;top:149px;width:204px;height:1px;background:#a0a0a0"></div><div class="a serif" style="left:15px;top:160px;font-size:17px;font-weight:bold;font-style:italic;color:#d02828;-webkit-text-stroke:0.3px #d02828;line-height:20px">y2=</div><div class="a serif" style="left:52px;top:159px;font-size:18px;color:#000;line-height:20px;white-space:pre"><b>(</b><span style="margin-left:2px"></span>sin<b><i>x</i>)</b><span style="font-size:11.5px;position:relative;top:-6px;margin-left:3px">2</span></div><div class="a" style="left:49px;top:187px;width:204px;height:1px;background:#a0a0a0"></div><div class="a serif" style="left:15px;top:198px;font-size:17px;font-weight:bold;font-style:italic;color:#30a030;-webkit-text-stroke:0.3px #30a030;line-height:20px">y3=</div><div class="a serif" style="left:52px;top:197px;font-size:18px;color:#000;line-height:20px;white-space:pre"><b>(</b><span style="margin-left:2px"></span>sin<b><i>x</i>)</b><span style="font-size:11.5px;position:relative;top:-6px;margin-left:3px">4</span></div><div class="a" style="left:49px;top:225px;width:204px;height:1px;background:#a0a0a0"></div><div class="a serif" style="left:15px;top:236px;font-size:17px;font-weight:bold;font-style:italic;color:#101010;-webkit-text-stroke:0.3px #101010;line-height:20px">y4=</div><div class="a serif" style="left:52px;top:235px;font-size:18px;color:#000;line-height:20px;white-space:pre"><b>(</b><span style="margin-left:2px"></span>sin<b><i>x</i>)</b><span style="font-size:11.5px;position:relative;top:-6px;margin-left:3px">6</span></div><div class="a" style="left:49px;top:263px;width:204px;height:1px;background:#a0a0a0"></div><div class="a serif" style="left:15px;top:274px;font-size:17px;font-weight:bold;font-style:italic;color:#40b0c8;-webkit-text-stroke:0.3px #40b0c8;line-height:20px">y5=</div><div class="a serif" style="left:52px;top:273px;font-size:18px;color:#000;line-height:20px;white-space:pre"><b>(</b><span style="margin-left:2px"></span>sin<b><i>x</i>)</b><span style="font-size:11.5px;position:relative;top:-6px;margin-left:3px">8</span></div><div class="a" style="left:49px;top:301px;width:204px;height:1px;background:#a0a0a0"></div><div class="a serif" style="left:15px;top:312px;font-size:17px;font-weight:bold;font-style:italic;color:#c030c0;-webkit-text-stroke:0.3px #c030c0;line-height:20px">y6=</div><div class="a serif" style="left:52px;top:311px;font-size:18px;color:#000;line-height:20px;white-space:pre"><b>(</b><span style="margin-left:2px"></span>sin<b><i>x</i>)</b><span style="font-size:11.5px;position:relative;top:-6px;margin-left:3px">10</span></div><svg class="a" style="left:11px;top:342px" width="20" height="20" viewBox="0 0 20 20"><path d="M2.8 15.5 L8.5 3.2" stroke="#000080" stroke-width="3.6" stroke-linecap="round"/><path d="M4.6 11.8 L8.4 3.8" stroke="#fff" stroke-width="1.3"/><path d="M2.2 16.3 L2.6 12.5 L5.2 13.6 Z" fill="#000080"/><path d="M2 16.8 L8 17.6 Q10 17.8 11 16.5 M13 16.8 Q14.5 17.8 17.8 17.2" fill="none" stroke="#c80000" stroke-width="1.5"/><circle cx="12" cy="14.8" r="2.4" fill="none" stroke="#c80000" stroke-width="1.5"/></svg><div class="a" style="left:35px;top:344px;font-size:12px;color:#000;white-space:pre">作成(<u>D</u>)</div><div class="a" style="left:5px;top:364px;width:248px;height:1px;background:#a4a4a0"></div><div class="a" style="left:5px;top:365px;width:248px;height:1px;background:#fcfcf8"></div><div class="a" style="left:5px;top:366px;width:248px;height:1px;background:#aaaaa4"></div><div class="a" style="left:5px;top:367px;width:248px;height:1px;background:#fcfcf4"></div><div class="a" style="left:6px;top:368px;width:247px;height:45px;background:#c8e4c6"></div><div class="a" style="left:5px;top:413px;width:248px;height:1px;background:#a4a4a0"></div><div class="a" style="left:5px;top:414px;width:248px;height:1px;background:#fcfcf8"></div><div class="a" style="left:5px;top:415px;width:248px;height:1px;background:#aaaaa4"></div><div class="a" style="left:5px;top:416px;width:248px;height:1px;background:#fcfcf4"></div><div class="a" style="left:112px;top:370px;font-size:14px;color:#000;transform:scaleX(1.0);transform-origin:0 0">陰関数</div><svg class="a" style="left:11px;top:391px" width="20" height="20" viewBox="0 0 20 20"><path d="M2.8 15.5 L8.5 3.2" stroke="#000080" stroke-width="3.6" stroke-linecap="round"/><path d="M4.6 11.8 L8.4 3.8" stroke="#fff" stroke-width="1.3"/><path d="M2.2 16.3 L2.6 12.5 L5.2 13.6 Z" fill="#000080"/><path d="M2 16.8 L8 17.6 Q10 17.8 11 16.5 M13 16.8 Q14.5 17.8 17.8 17.2" fill="none" stroke="#c80000" stroke-width="1.5"/><circle cx="12" cy="14.8" r="2.4" fill="none" stroke="#c80000" stroke-width="1.5"/></svg><div class="a" style="left:35px;top:394px;font-size:12px;color:#000;white-space:pre">作成(<u>R</u>)</div><div class="a" style="left:6px;top:417px;width:247px;height:45px;background:#ece8bc"></div><div class="a" style="left:5px;top:462px;width:248px;height:1px;background:#a4a4a0"></div><div class="a" style="left:5px;top:463px;width:248px;height:1px;background:#fcfcf8"></div><div class="a" style="left:5px;top:464px;width:248px;height:1px;background:#aaaaa4"></div><div class="a" style="left:5px;top:465px;width:248px;height:1px;background:#fcfcf4"></div><div class="a" style="left:112px;top:419px;font-size:14px;color:#000;transform:scaleX(1.0);transform-origin:0 0">曲線</div><svg class="a" style="left:11px;top:440px" width="20" height="20" viewBox="0 0 20 20"><path d="M2.8 15.5 L8.5 3.2" stroke="#000080" stroke-width="3.6" stroke-linecap="round"/><path d="M4.6 11.8 L8.4 3.8" stroke="#fff" stroke-width="1.3"/><path d="M2.2 16.3 L2.6 12.5 L5.2 13.6 Z" fill="#000080"/><path d="M2 16.8 L8 17.6 Q10 17.8 11 16.5 M13 16.8 Q14.5 17.8 17.8 17.2" fill="none" stroke="#c80000" stroke-width="1.5"/><circle cx="12" cy="14.8" r="2.4" fill="none" stroke="#c80000" stroke-width="1.5"/></svg><div class="a" style="left:35px;top:443px;font-size:12px;color:#000;white-space:pre">作成</div><div class="a" style="left:6px;top:466px;width:247px;height:45px;background:#eedcb2"></div><div class="a" style="left:5px;top:511px;width:248px;height:1px;background:#a4a4a0"></div><div class="a" style="left:5px;top:512px;width:248px;height:1px;background:#fcfcf8"></div><div class="a" style="left:5px;top:513px;width:248px;height:1px;background:#aaaaa4"></div><div class="a" style="left:5px;top:514px;width:248px;height:1px;background:#fcfcf4"></div><div class="a" style="left:113px;top:468px;font-size:14px;color:#000;transform:scaleX(1.0);transform-origin:0 0">基本図形</div><svg class="a" style="left:11px;top:489px" width="20" height="20" viewBox="0 0 20 20"><path d="M2.8 15.5 L8.5 3.2" stroke="#000080" stroke-width="3.6" stroke-linecap="round"/><path d="M4.6 11.8 L8.4 3.8" stroke="#fff" stroke-width="1.3"/><path d="M2.2 16.3 L2.6 12.5 L5.2 13.6 Z" fill="#000080"/><path d="M2 16.8 L8 17.6 Q10 17.8 11 16.5 M13 16.8 Q14.5 17.8 17.8 17.2" fill="none" stroke="#c80000" stroke-width="1.5"/><circle cx="12" cy="14.8" r="2.4" fill="none" stroke="#c80000" stroke-width="1.5"/></svg><div class="a" style="left:35px;top:492px;font-size:12px;color:#000;white-space:pre">作成</div><div class="a" style="left:6px;top:515px;width:247px;height:58px;background:#eec8c8"></div><div class="a" style="left:5px;top:573px;width:248px;height:1px;background:#a4a4a0"></div><div class="a" style="left:5px;top:574px;width:248px;height:1px;background:#fcfcf8"></div><div class="a" style="left:5px;top:575px;width:248px;height:1px;background:#aaaaa4"></div><div class="a" style="left:5px;top:576px;width:248px;height:1px;background:#fcfcf4"></div><div class="a" style="left:113px;top:516px;font-size:14px;color:#000;transform:scaleX(0.86);transform-origin:0 0">パラメータ</div><svg class="a" style="left:87px;top:367px" width="22" height="22"><circle cx="10.5" cy="10" r="6.5" fill="none" stroke="#1818b0" stroke-width="1.3"/><path d="M1 10 H20 M10.5 1 V20" stroke="#000" stroke-width="1.2"/></svg><svg class="a" style="left:89px;top:417px" width="20" height="20"><path d="M8 3 C3 1 1 6 3 9 C5 12 9 11 11 9 M15 5 C10 12 7 15 3 18" fill="none" stroke="#1818b0" stroke-width="1.2"/><circle cx="9" cy="4.5" r="1.8" fill="#1818b0"/></svg><svg class="a" style="left:89px;top:468px" width="20" height="18"><circle cx="4" cy="4" r="1.7" fill="#1818b0"/><circle cx="11" cy="11" r="5" fill="#c8c8f8" stroke="#1818b0" stroke-width="1.2"/><circle cx="11" cy="11" r="1.5" fill="#1818b0"/></svg><div class="a serif" style="left:91px;top:513px;font-size:14px;font-style:italic;font-weight:bold;color:#1818b0">a</div><div class="a serif" style="left:98px;top:519px;font-size:14px;font-style:italic;font-weight:bold;color:#1818b0">b</div><svg class="a" style="left:160px;top:540px" width="90" height="30"><g fill="#000"><ellipse cx="10.0" cy="22.0" rx="2.2" ry="1.8"/><circle cx="7.7" cy="19.0" r="1"/><circle cx="10.0" cy="18.2" r="1"/><circle cx="12.3" cy="19.0" r="1"/></g><g fill="#000"><ellipse cx="18.0" cy="17.0" rx="2.2" ry="1.8"/><circle cx="15.7" cy="14.0" r="1"/><circle cx="18.0" cy="13.2" r="1"/><circle cx="20.3" cy="14.0" r="1"/></g><rect x="34.5" y="10.5" width="10" height="6" rx="1.5" fill="none" stroke="#000" stroke-width="1.2"/><circle cx="39.5" cy="13.5" r="1.6" fill="none" stroke="#000"/><g fill="#888"><ellipse cx="50.0" cy="19.0" rx="2.2" ry="1.8"/><circle cx="47.7" cy="16.0" r="1"/><circle cx="50.0" cy="15.2" r="1"/><circle cx="52.3" cy="16.0" r="1"/></g><g fill="#888"><ellipse cx="41.0" cy="25.0" rx="2.2" ry="1.8"/><circle cx="38.7" cy="22.0" r="1"/><circle cx="41.0" cy="21.2" r="1"/><circle cx="43.3" cy="22.0" r="1"/></g><circle cx="68.5" cy="13" r="3.8" fill="#666" stroke="#000"/><path d="M71 9 Q73 7 74 9" stroke="#000" fill="none"/><g fill="#000"><ellipse cx="79.0" cy="18.0" rx="2.2" ry="1.8"/><circle cx="76.7" cy="15.0" r="1"/><circle cx="79.0" cy="14.2" r="1"/><circle cx="81.3" cy="15.0" r="1"/></g><g fill="#000"><ellipse cx="70.0" cy="25.0" rx="2.2" ry="1.8"/><circle cx="67.7" cy="22.0" r="1"/><circle cx="70.0" cy="21.2" r="1"/><circle cx="72.3" cy="22.0" r="1"/></g></svg><div class="a" style="left:253px;top:89px;width:17px;height:487px;background:#f4f2ea"></div><div class="a" style="left:253px;top:89px;width:17px;height:17px;background:#ece9d8;border-right:1px solid #716f64;border-bottom:1px solid #716f64;border-left:1px solid #fff;border-top:1px solid #fff"></div><svg class="a" style="left:253px;top:89px" width="17" height="17"><path d="M8.500000 6.500000 l-4 4 h8 Z" fill="#000"/></svg><div class="a" style="left:253px;top:106px;width:17px;height:396px;background:#ece9d8;border-right:1px solid #716f64;border-bottom:1px solid #716f64;border-left:1px solid #fff;border-top:1px solid #fff"></div><div class="a" style="left:255px;top:562px;width:15px;height:14px;background:#ece9d8;border-right:1px solid #716f64;border-bottom:1px solid #716f64;border-left:1px solid #fff;border-top:1px solid #fff"></div><svg class="a" style="left:255px;top:562px" width="15" height="14"><path d="M7.500000 9.000000 l-4 -4 h8 Z" fill="#000"/></svg><div class="a" style="left:4px;top:576px;width:266px;height:20px;background:#f4f2ea"></div><div class="a" style="left:4px;top:578px;width:16px;height:17px;background:#ece9d8;border-right:1px solid #716f64;border-bottom:1px solid #716f64;border-left:1px solid #fff;border-top:1px solid #fff"></div><svg class="a" style="left:4px;top:578px" width="16" height="17"><path d="M6.000000 8.500000 l4 -4 v8 Z" fill="#000"/></svg><div class="a" style="left:20px;top:578px;width:54px;height:17px;background:#ece9d8;border-right:1px solid #716f64;border-bottom:1px solid #716f64;border-left:1px solid #fff;border-top:1px solid #fff"></div><div class="a" style="left:237px;top:577px;width:16px;height:18px;background:#ece9d8;border-right:1px solid #716f64;border-bottom:1px solid #716f64;border-left:1px solid #fff;border-top:1px solid #fff"></div><svg class="a" style="left:237px;top:577px" width="16" height="18"><path d="M10.000000 9.000000 l-4 -4 v8 Z" fill="#000"/></svg><svg class="a" style="left:253px;top:577px" width="17" height="19"><path d="M16 6 L5 17 M16 10 L9 17 M16 14 L13 17" stroke="#b0aca0" stroke-width="1"/></svg><div class="a" style="left:0;top:596px;width:274px;height:4px;background:#7288e0"></div></div>
</body></html>
